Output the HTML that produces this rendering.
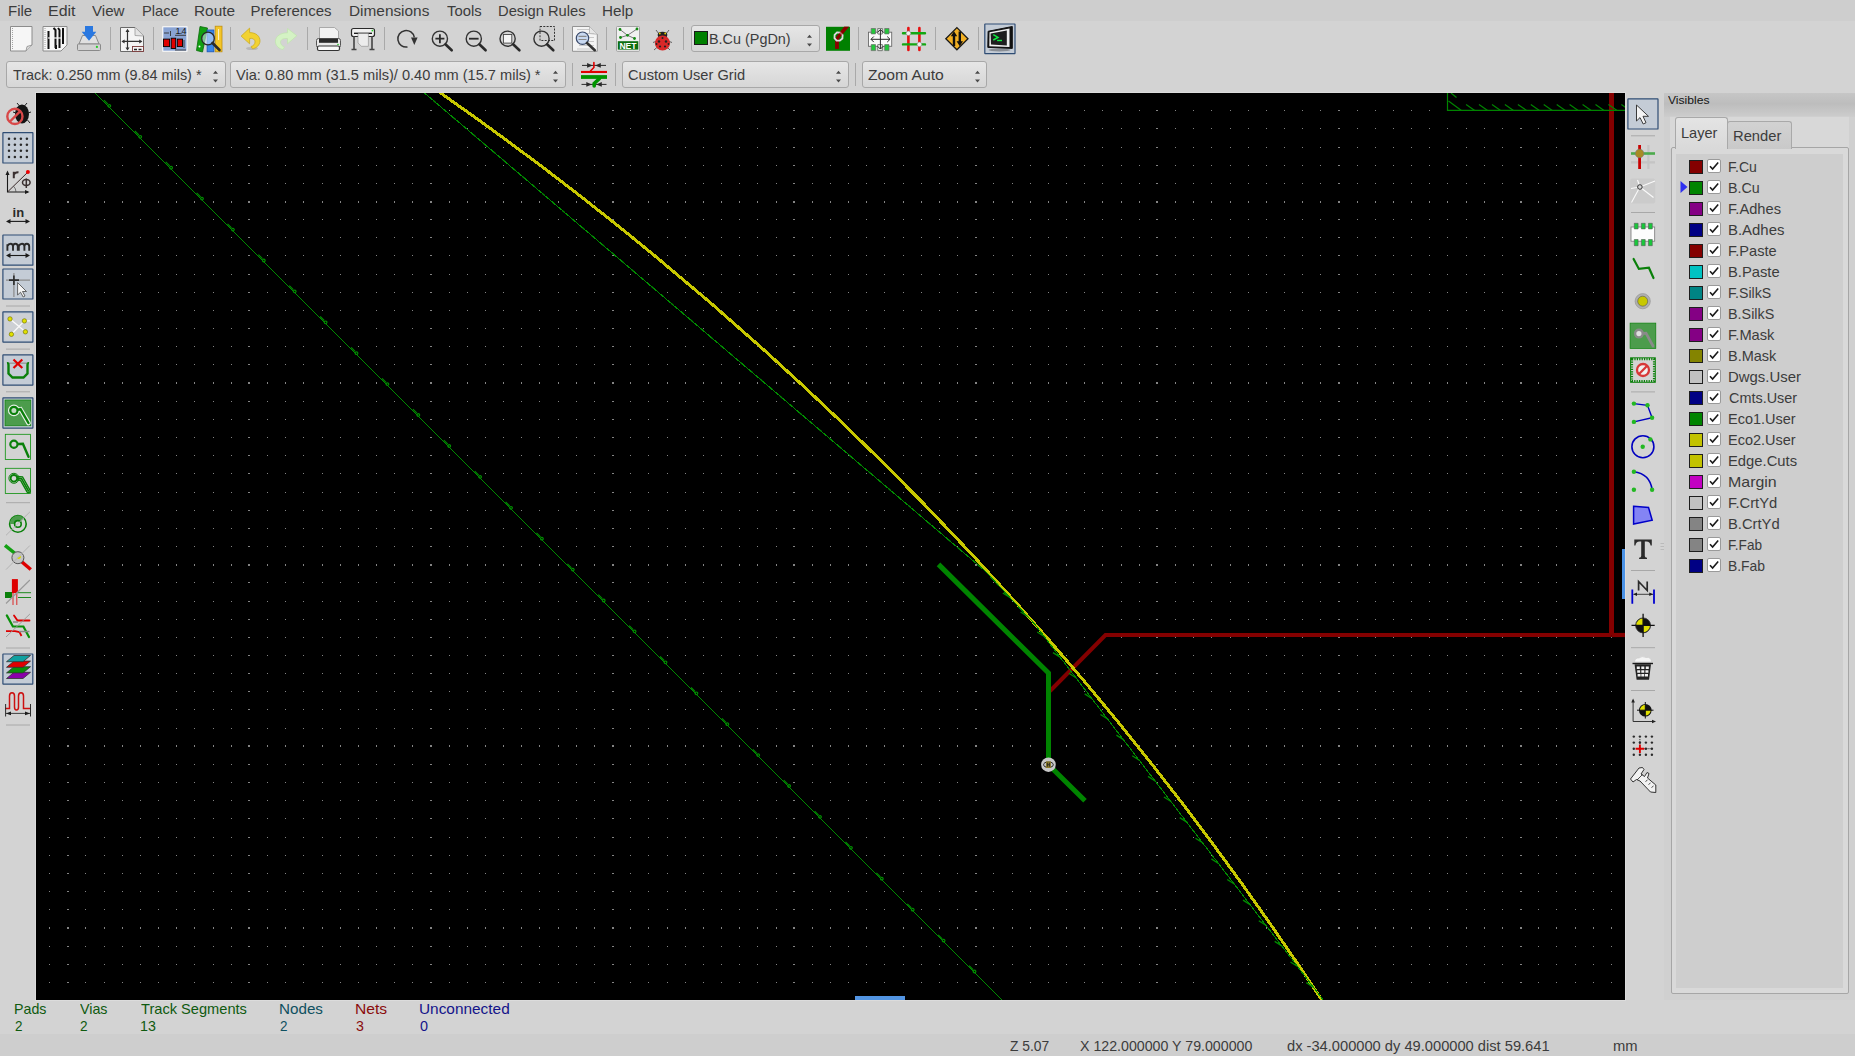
<!DOCTYPE html>
<html><head><meta charset="utf-8"><style>
html,body{margin:0;padding:0;}
body{width:1855px;height:1056px;position:relative;overflow:hidden;background:#d3d3d3;font-family:"Liberation Sans",sans-serif;}
.abs{position:absolute;}
.combo{border:1px solid #a8a8a8;border-radius:3px;background:linear-gradient(#e6e6e6,#d6d6d6);}
.t{position:absolute;white-space:nowrap;line-height:1;transform-origin:0 0;}
svg{display:block}
</style></head><body>
<svg class="abs" style="left:36px;top:93px" width="1589" height="907" viewBox="0 0 1589 907"><rect width="1589" height="907" fill="#000"/><path d="M13 17h1v1h-1zM31 17h2v1h-2zM49 17h1v1h-1zM68 17h1v1h-1zM86 17h1v1h-1zM104 17h1v1h-1zM122 17h1v1h-1zM140 17h1v1h-1zM158 17h1v1h-1zM177 17h1v1h-1zM195 17h1v1h-1zM212 17h2v1h-2zM231 17h1v1h-1zM249 17h1v1h-1zM267 17h1v1h-1zM286 17h1v1h-1zM304 17h1v1h-1zM322 17h1v1h-1zM340 17h1v1h-1zM358 17h1v1h-1zM376 17h1v1h-1zM394 17h2v1h-2zM413 17h1v1h-1zM431 17h1v1h-1zM449 17h1v1h-1zM467 17h1v1h-1zM485 17h1v1h-1zM503 17h1v1h-1zM522 17h1v1h-1zM540 17h1v1h-1zM558 17h1v1h-1zM576 17h2v1h-2zM594 17h1v1h-1zM612 17h1v1h-1zM631 17h1v1h-1zM649 17h1v1h-1zM667 17h1v1h-1zM685 17h1v1h-1zM703 17h1v1h-1zM721 17h1v1h-1zM740 17h1v1h-1zM757 17h2v1h-2zM776 17h1v1h-1zM794 17h1v1h-1zM812 17h1v1h-1zM830 17h1v1h-1zM848 17h1v1h-1zM867 17h1v1h-1zM885 17h1v1h-1zM903 17h1v1h-1zM921 17h1v1h-1zM939 17h2v1h-2zM957 17h1v1h-1zM976 17h1v1h-1zM994 17h1v1h-1zM1012 17h1v1h-1zM1030 17h1v1h-1zM1048 17h1v1h-1zM1066 17h1v1h-1zM1085 17h1v1h-1zM1103 17h1v1h-1zM1120 17h2v1h-2zM1139 17h1v1h-1zM1157 17h1v1h-1zM1175 17h1v1h-1zM1194 17h1v1h-1zM1212 17h1v1h-1zM1230 17h1v1h-1zM1248 17h1v1h-1zM1266 17h1v1h-1zM1284 17h1v1h-1zM1302 17h2v1h-2zM1321 17h1v1h-1zM1339 17h1v1h-1zM1357 17h1v1h-1zM1375 17h1v1h-1zM1393 17h1v1h-1zM1411 17h1v1h-1zM1430 17h1v1h-1zM1448 17h1v1h-1zM1466 17h1v1h-1zM1484 17h2v1h-2zM1502 17h1v1h-1zM1520 17h1v1h-1zM1539 17h1v1h-1zM1557 17h1v1h-1zM1575 17h1v1h-1zM13 35h1v1h-1zM31 35h2v1h-2zM49 35h1v1h-1zM68 35h1v1h-1zM86 35h1v1h-1zM104 35h1v1h-1zM122 35h1v1h-1zM140 35h1v1h-1zM158 35h1v1h-1zM177 35h1v1h-1zM195 35h1v1h-1zM212 35h2v1h-2zM231 35h1v1h-1zM249 35h1v1h-1zM267 35h1v1h-1zM286 35h1v1h-1zM304 35h1v1h-1zM322 35h1v1h-1zM340 35h1v1h-1zM358 35h1v1h-1zM376 35h1v1h-1zM394 35h2v1h-2zM413 35h1v1h-1zM431 35h1v1h-1zM449 35h1v1h-1zM467 35h1v1h-1zM485 35h1v1h-1zM503 35h1v1h-1zM522 35h1v1h-1zM540 35h1v1h-1zM558 35h1v1h-1zM576 35h2v1h-2zM594 35h1v1h-1zM612 35h1v1h-1zM631 35h1v1h-1zM649 35h1v1h-1zM667 35h1v1h-1zM685 35h1v1h-1zM703 35h1v1h-1zM721 35h1v1h-1zM740 35h1v1h-1zM757 35h2v1h-2zM776 35h1v1h-1zM794 35h1v1h-1zM812 35h1v1h-1zM830 35h1v1h-1zM848 35h1v1h-1zM867 35h1v1h-1zM885 35h1v1h-1zM903 35h1v1h-1zM921 35h1v1h-1zM939 35h2v1h-2zM957 35h1v1h-1zM976 35h1v1h-1zM994 35h1v1h-1zM1012 35h1v1h-1zM1030 35h1v1h-1zM1048 35h1v1h-1zM1066 35h1v1h-1zM1085 35h1v1h-1zM1103 35h1v1h-1zM1120 35h2v1h-2zM1139 35h1v1h-1zM1157 35h1v1h-1zM1175 35h1v1h-1zM1194 35h1v1h-1zM1212 35h1v1h-1zM1230 35h1v1h-1zM1248 35h1v1h-1zM1266 35h1v1h-1zM1284 35h1v1h-1zM1302 35h2v1h-2zM1321 35h1v1h-1zM1339 35h1v1h-1zM1357 35h1v1h-1zM1375 35h1v1h-1zM1393 35h1v1h-1zM1411 35h1v1h-1zM1430 35h1v1h-1zM1448 35h1v1h-1zM1466 35h1v1h-1zM1484 35h2v1h-2zM1502 35h1v1h-1zM1520 35h1v1h-1zM1539 35h1v1h-1zM1557 35h1v1h-1zM1575 35h1v1h-1zM13 54h1v1h-1zM31 54h2v1h-2zM49 54h1v1h-1zM68 54h1v1h-1zM86 54h1v1h-1zM104 54h1v1h-1zM122 54h1v1h-1zM140 54h1v1h-1zM158 54h1v1h-1zM177 54h1v1h-1zM195 54h1v1h-1zM212 54h2v1h-2zM231 54h1v1h-1zM249 54h1v1h-1zM267 54h1v1h-1zM286 54h1v1h-1zM304 54h1v1h-1zM322 54h1v1h-1zM340 54h1v1h-1zM358 54h1v1h-1zM376 54h1v1h-1zM394 54h2v1h-2zM413 54h1v1h-1zM431 54h1v1h-1zM449 54h1v1h-1zM467 54h1v1h-1zM485 54h1v1h-1zM503 54h1v1h-1zM522 54h1v1h-1zM540 54h1v1h-1zM558 54h1v1h-1zM576 54h2v1h-2zM594 54h1v1h-1zM612 54h1v1h-1zM631 54h1v1h-1zM649 54h1v1h-1zM667 54h1v1h-1zM685 54h1v1h-1zM703 54h1v1h-1zM721 54h1v1h-1zM740 54h1v1h-1zM757 54h2v1h-2zM776 54h1v1h-1zM794 54h1v1h-1zM812 54h1v1h-1zM830 54h1v1h-1zM848 54h1v1h-1zM867 54h1v1h-1zM885 54h1v1h-1zM903 54h1v1h-1zM921 54h1v1h-1zM939 54h2v1h-2zM957 54h1v1h-1zM976 54h1v1h-1zM994 54h1v1h-1zM1012 54h1v1h-1zM1030 54h1v1h-1zM1048 54h1v1h-1zM1066 54h1v1h-1zM1085 54h1v1h-1zM1103 54h1v1h-1zM1120 54h2v1h-2zM1139 54h1v1h-1zM1157 54h1v1h-1zM1175 54h1v1h-1zM1194 54h1v1h-1zM1212 54h1v1h-1zM1230 54h1v1h-1zM1248 54h1v1h-1zM1266 54h1v1h-1zM1284 54h1v1h-1zM1302 54h2v1h-2zM1321 54h1v1h-1zM1339 54h1v1h-1zM1357 54h1v1h-1zM1375 54h1v1h-1zM1393 54h1v1h-1zM1411 54h1v1h-1zM1430 54h1v1h-1zM1448 54h1v1h-1zM1466 54h1v1h-1zM1484 54h2v1h-2zM1502 54h1v1h-1zM1520 54h1v1h-1zM1539 54h1v1h-1zM1557 54h1v1h-1zM1575 54h1v1h-1zM13 72h1v1h-1zM31 72h2v1h-2zM49 72h1v1h-1zM68 72h1v1h-1zM86 72h1v1h-1zM104 72h1v1h-1zM122 72h1v1h-1zM140 72h1v1h-1zM158 72h1v1h-1zM177 72h1v1h-1zM195 72h1v1h-1zM212 72h2v1h-2zM231 72h1v1h-1zM249 72h1v1h-1zM267 72h1v1h-1zM286 72h1v1h-1zM304 72h1v1h-1zM322 72h1v1h-1zM340 72h1v1h-1zM358 72h1v1h-1zM376 72h1v1h-1zM394 72h2v1h-2zM413 72h1v1h-1zM431 72h1v1h-1zM449 72h1v1h-1zM467 72h1v1h-1zM485 72h1v1h-1zM503 72h1v1h-1zM522 72h1v1h-1zM540 72h1v1h-1zM558 72h1v1h-1zM576 72h2v1h-2zM594 72h1v1h-1zM612 72h1v1h-1zM631 72h1v1h-1zM649 72h1v1h-1zM667 72h1v1h-1zM685 72h1v1h-1zM703 72h1v1h-1zM721 72h1v1h-1zM740 72h1v1h-1zM757 72h2v1h-2zM776 72h1v1h-1zM794 72h1v1h-1zM812 72h1v1h-1zM830 72h1v1h-1zM848 72h1v1h-1zM867 72h1v1h-1zM885 72h1v1h-1zM903 72h1v1h-1zM921 72h1v1h-1zM939 72h2v1h-2zM957 72h1v1h-1zM976 72h1v1h-1zM994 72h1v1h-1zM1012 72h1v1h-1zM1030 72h1v1h-1zM1048 72h1v1h-1zM1066 72h1v1h-1zM1085 72h1v1h-1zM1103 72h1v1h-1zM1120 72h2v1h-2zM1139 72h1v1h-1zM1157 72h1v1h-1zM1175 72h1v1h-1zM1194 72h1v1h-1zM1212 72h1v1h-1zM1230 72h1v1h-1zM1248 72h1v1h-1zM1266 72h1v1h-1zM1284 72h1v1h-1zM1302 72h2v1h-2zM1321 72h1v1h-1zM1339 72h1v1h-1zM1357 72h1v1h-1zM1375 72h1v1h-1zM1393 72h1v1h-1zM1411 72h1v1h-1zM1430 72h1v1h-1zM1448 72h1v1h-1zM1466 72h1v1h-1zM1484 72h2v1h-2zM1502 72h1v1h-1zM1520 72h1v1h-1zM1539 72h1v1h-1zM1557 72h1v1h-1zM1575 72h1v1h-1zM13 90h1v1h-1zM31 90h2v1h-2zM49 90h1v1h-1zM68 90h1v1h-1zM86 90h1v1h-1zM104 90h1v1h-1zM122 90h1v1h-1zM140 90h1v1h-1zM158 90h1v1h-1zM177 90h1v1h-1zM195 90h1v1h-1zM212 90h2v1h-2zM231 90h1v1h-1zM249 90h1v1h-1zM267 90h1v1h-1zM286 90h1v1h-1zM304 90h1v1h-1zM322 90h1v1h-1zM340 90h1v1h-1zM358 90h1v1h-1zM376 90h1v1h-1zM394 90h2v1h-2zM413 90h1v1h-1zM431 90h1v1h-1zM449 90h1v1h-1zM467 90h1v1h-1zM485 90h1v1h-1zM503 90h1v1h-1zM522 90h1v1h-1zM540 90h1v1h-1zM558 90h1v1h-1zM576 90h2v1h-2zM594 90h1v1h-1zM612 90h1v1h-1zM631 90h1v1h-1zM649 90h1v1h-1zM667 90h1v1h-1zM685 90h1v1h-1zM703 90h1v1h-1zM721 90h1v1h-1zM740 90h1v1h-1zM757 90h2v1h-2zM776 90h1v1h-1zM794 90h1v1h-1zM812 90h1v1h-1zM830 90h1v1h-1zM848 90h1v1h-1zM867 90h1v1h-1zM885 90h1v1h-1zM903 90h1v1h-1zM921 90h1v1h-1zM939 90h2v1h-2zM957 90h1v1h-1zM976 90h1v1h-1zM994 90h1v1h-1zM1012 90h1v1h-1zM1030 90h1v1h-1zM1048 90h1v1h-1zM1066 90h1v1h-1zM1085 90h1v1h-1zM1103 90h1v1h-1zM1120 90h2v1h-2zM1139 90h1v1h-1zM1157 90h1v1h-1zM1175 90h1v1h-1zM1194 90h1v1h-1zM1212 90h1v1h-1zM1230 90h1v1h-1zM1248 90h1v1h-1zM1266 90h1v1h-1zM1284 90h1v1h-1zM1302 90h2v1h-2zM1321 90h1v1h-1zM1339 90h1v1h-1zM1357 90h1v1h-1zM1375 90h1v1h-1zM1393 90h1v1h-1zM1411 90h1v1h-1zM1430 90h1v1h-1zM1448 90h1v1h-1zM1466 90h1v1h-1zM1484 90h2v1h-2zM1502 90h1v1h-1zM1520 90h1v1h-1zM1539 90h1v1h-1zM1557 90h1v1h-1zM1575 90h1v1h-1zM13 108h1v2h-1zM31 108h2v2h-2zM49 108h1v2h-1zM68 108h1v2h-1zM86 108h1v2h-1zM104 108h1v2h-1zM122 108h1v2h-1zM140 108h1v2h-1zM158 108h1v2h-1zM177 108h1v2h-1zM195 108h1v2h-1zM212 108h2v2h-2zM231 108h1v2h-1zM249 108h1v2h-1zM267 108h1v2h-1zM286 108h1v2h-1zM304 108h1v2h-1zM322 108h1v2h-1zM340 108h1v2h-1zM358 108h1v2h-1zM376 108h1v2h-1zM394 108h2v2h-2zM413 108h1v2h-1zM431 108h1v2h-1zM449 108h1v2h-1zM467 108h1v2h-1zM485 108h1v2h-1zM503 108h1v2h-1zM522 108h1v2h-1zM540 108h1v2h-1zM558 108h1v2h-1zM576 108h2v2h-2zM594 108h1v2h-1zM612 108h1v2h-1zM631 108h1v2h-1zM649 108h1v2h-1zM667 108h1v2h-1zM685 108h1v2h-1zM703 108h1v2h-1zM721 108h1v2h-1zM740 108h1v2h-1zM757 108h2v2h-2zM776 108h1v2h-1zM794 108h1v2h-1zM812 108h1v2h-1zM830 108h1v2h-1zM848 108h1v2h-1zM867 108h1v2h-1zM885 108h1v2h-1zM903 108h1v2h-1zM921 108h1v2h-1zM939 108h2v2h-2zM957 108h1v2h-1zM976 108h1v2h-1zM994 108h1v2h-1zM1012 108h1v2h-1zM1030 108h1v2h-1zM1048 108h1v2h-1zM1066 108h1v2h-1zM1085 108h1v2h-1zM1103 108h1v2h-1zM1120 108h2v2h-2zM1139 108h1v2h-1zM1157 108h1v2h-1zM1175 108h1v2h-1zM1194 108h1v2h-1zM1212 108h1v2h-1zM1230 108h1v2h-1zM1248 108h1v2h-1zM1266 108h1v2h-1zM1284 108h1v2h-1zM1302 108h2v2h-2zM1321 108h1v2h-1zM1339 108h1v2h-1zM1357 108h1v2h-1zM1375 108h1v2h-1zM1393 108h1v2h-1zM1411 108h1v2h-1zM1430 108h1v2h-1zM1448 108h1v2h-1zM1466 108h1v2h-1zM1484 108h2v2h-2zM1502 108h1v2h-1zM1520 108h1v2h-1zM1539 108h1v2h-1zM1557 108h1v2h-1zM1575 108h1v2h-1zM13 126h1v1h-1zM31 126h2v1h-2zM49 126h1v1h-1zM68 126h1v1h-1zM86 126h1v1h-1zM104 126h1v1h-1zM122 126h1v1h-1zM140 126h1v1h-1zM158 126h1v1h-1zM177 126h1v1h-1zM195 126h1v1h-1zM212 126h2v1h-2zM231 126h1v1h-1zM249 126h1v1h-1zM267 126h1v1h-1zM286 126h1v1h-1zM304 126h1v1h-1zM322 126h1v1h-1zM340 126h1v1h-1zM358 126h1v1h-1zM376 126h1v1h-1zM394 126h2v1h-2zM413 126h1v1h-1zM431 126h1v1h-1zM449 126h1v1h-1zM467 126h1v1h-1zM485 126h1v1h-1zM503 126h1v1h-1zM522 126h1v1h-1zM540 126h1v1h-1zM558 126h1v1h-1zM576 126h2v1h-2zM594 126h1v1h-1zM612 126h1v1h-1zM631 126h1v1h-1zM649 126h1v1h-1zM667 126h1v1h-1zM685 126h1v1h-1zM703 126h1v1h-1zM721 126h1v1h-1zM740 126h1v1h-1zM757 126h2v1h-2zM776 126h1v1h-1zM794 126h1v1h-1zM812 126h1v1h-1zM830 126h1v1h-1zM848 126h1v1h-1zM867 126h1v1h-1zM885 126h1v1h-1zM903 126h1v1h-1zM921 126h1v1h-1zM939 126h2v1h-2zM957 126h1v1h-1zM976 126h1v1h-1zM994 126h1v1h-1zM1012 126h1v1h-1zM1030 126h1v1h-1zM1048 126h1v1h-1zM1066 126h1v1h-1zM1085 126h1v1h-1zM1103 126h1v1h-1zM1120 126h2v1h-2zM1139 126h1v1h-1zM1157 126h1v1h-1zM1175 126h1v1h-1zM1194 126h1v1h-1zM1212 126h1v1h-1zM1230 126h1v1h-1zM1248 126h1v1h-1zM1266 126h1v1h-1zM1284 126h1v1h-1zM1302 126h2v1h-2zM1321 126h1v1h-1zM1339 126h1v1h-1zM1357 126h1v1h-1zM1375 126h1v1h-1zM1393 126h1v1h-1zM1411 126h1v1h-1zM1430 126h1v1h-1zM1448 126h1v1h-1zM1466 126h1v1h-1zM1484 126h2v1h-2zM1502 126h1v1h-1zM1520 126h1v1h-1zM1539 126h1v1h-1zM1557 126h1v1h-1zM1575 126h1v1h-1zM13 144h1v1h-1zM31 144h2v1h-2zM49 144h1v1h-1zM68 144h1v1h-1zM86 144h1v1h-1zM104 144h1v1h-1zM122 144h1v1h-1zM140 144h1v1h-1zM158 144h1v1h-1zM177 144h1v1h-1zM195 144h1v1h-1zM212 144h2v1h-2zM231 144h1v1h-1zM249 144h1v1h-1zM267 144h1v1h-1zM286 144h1v1h-1zM304 144h1v1h-1zM322 144h1v1h-1zM340 144h1v1h-1zM358 144h1v1h-1zM376 144h1v1h-1zM394 144h2v1h-2zM413 144h1v1h-1zM431 144h1v1h-1zM449 144h1v1h-1zM467 144h1v1h-1zM485 144h1v1h-1zM503 144h1v1h-1zM522 144h1v1h-1zM540 144h1v1h-1zM558 144h1v1h-1zM576 144h2v1h-2zM594 144h1v1h-1zM612 144h1v1h-1zM631 144h1v1h-1zM649 144h1v1h-1zM667 144h1v1h-1zM685 144h1v1h-1zM703 144h1v1h-1zM721 144h1v1h-1zM740 144h1v1h-1zM757 144h2v1h-2zM776 144h1v1h-1zM794 144h1v1h-1zM812 144h1v1h-1zM830 144h1v1h-1zM848 144h1v1h-1zM867 144h1v1h-1zM885 144h1v1h-1zM903 144h1v1h-1zM921 144h1v1h-1zM939 144h2v1h-2zM957 144h1v1h-1zM976 144h1v1h-1zM994 144h1v1h-1zM1012 144h1v1h-1zM1030 144h1v1h-1zM1048 144h1v1h-1zM1066 144h1v1h-1zM1085 144h1v1h-1zM1103 144h1v1h-1zM1120 144h2v1h-2zM1139 144h1v1h-1zM1157 144h1v1h-1zM1175 144h1v1h-1zM1194 144h1v1h-1zM1212 144h1v1h-1zM1230 144h1v1h-1zM1248 144h1v1h-1zM1266 144h1v1h-1zM1284 144h1v1h-1zM1302 144h2v1h-2zM1321 144h1v1h-1zM1339 144h1v1h-1zM1357 144h1v1h-1zM1375 144h1v1h-1zM1393 144h1v1h-1zM1411 144h1v1h-1zM1430 144h1v1h-1zM1448 144h1v1h-1zM1466 144h1v1h-1zM1484 144h2v1h-2zM1502 144h1v1h-1zM1520 144h1v1h-1zM1539 144h1v1h-1zM1557 144h1v1h-1zM1575 144h1v1h-1zM13 162h1v1h-1zM31 162h2v1h-2zM49 162h1v1h-1zM68 162h1v1h-1zM86 162h1v1h-1zM104 162h1v1h-1zM122 162h1v1h-1zM140 162h1v1h-1zM158 162h1v1h-1zM177 162h1v1h-1zM195 162h1v1h-1zM212 162h2v1h-2zM231 162h1v1h-1zM249 162h1v1h-1zM267 162h1v1h-1zM286 162h1v1h-1zM304 162h1v1h-1zM322 162h1v1h-1zM340 162h1v1h-1zM358 162h1v1h-1zM376 162h1v1h-1zM394 162h2v1h-2zM413 162h1v1h-1zM431 162h1v1h-1zM449 162h1v1h-1zM467 162h1v1h-1zM485 162h1v1h-1zM503 162h1v1h-1zM522 162h1v1h-1zM540 162h1v1h-1zM558 162h1v1h-1zM576 162h2v1h-2zM594 162h1v1h-1zM612 162h1v1h-1zM631 162h1v1h-1zM649 162h1v1h-1zM667 162h1v1h-1zM685 162h1v1h-1zM703 162h1v1h-1zM721 162h1v1h-1zM740 162h1v1h-1zM757 162h2v1h-2zM776 162h1v1h-1zM794 162h1v1h-1zM812 162h1v1h-1zM830 162h1v1h-1zM848 162h1v1h-1zM867 162h1v1h-1zM885 162h1v1h-1zM903 162h1v1h-1zM921 162h1v1h-1zM939 162h2v1h-2zM957 162h1v1h-1zM976 162h1v1h-1zM994 162h1v1h-1zM1012 162h1v1h-1zM1030 162h1v1h-1zM1048 162h1v1h-1zM1066 162h1v1h-1zM1085 162h1v1h-1zM1103 162h1v1h-1zM1120 162h2v1h-2zM1139 162h1v1h-1zM1157 162h1v1h-1zM1175 162h1v1h-1zM1194 162h1v1h-1zM1212 162h1v1h-1zM1230 162h1v1h-1zM1248 162h1v1h-1zM1266 162h1v1h-1zM1284 162h1v1h-1zM1302 162h2v1h-2zM1321 162h1v1h-1zM1339 162h1v1h-1zM1357 162h1v1h-1zM1375 162h1v1h-1zM1393 162h1v1h-1zM1411 162h1v1h-1zM1430 162h1v1h-1zM1448 162h1v1h-1zM1466 162h1v1h-1zM1484 162h2v1h-2zM1502 162h1v1h-1zM1520 162h1v1h-1zM1539 162h1v1h-1zM1557 162h1v1h-1zM1575 162h1v1h-1zM13 181h1v1h-1zM31 181h2v1h-2zM49 181h1v1h-1zM68 181h1v1h-1zM86 181h1v1h-1zM104 181h1v1h-1zM122 181h1v1h-1zM140 181h1v1h-1zM158 181h1v1h-1zM177 181h1v1h-1zM195 181h1v1h-1zM212 181h2v1h-2zM231 181h1v1h-1zM249 181h1v1h-1zM267 181h1v1h-1zM286 181h1v1h-1zM304 181h1v1h-1zM322 181h1v1h-1zM340 181h1v1h-1zM358 181h1v1h-1zM376 181h1v1h-1zM394 181h2v1h-2zM413 181h1v1h-1zM431 181h1v1h-1zM449 181h1v1h-1zM467 181h1v1h-1zM485 181h1v1h-1zM503 181h1v1h-1zM522 181h1v1h-1zM540 181h1v1h-1zM558 181h1v1h-1zM576 181h2v1h-2zM594 181h1v1h-1zM612 181h1v1h-1zM631 181h1v1h-1zM649 181h1v1h-1zM667 181h1v1h-1zM685 181h1v1h-1zM703 181h1v1h-1zM721 181h1v1h-1zM740 181h1v1h-1zM757 181h2v1h-2zM776 181h1v1h-1zM794 181h1v1h-1zM812 181h1v1h-1zM830 181h1v1h-1zM848 181h1v1h-1zM867 181h1v1h-1zM885 181h1v1h-1zM903 181h1v1h-1zM921 181h1v1h-1zM939 181h2v1h-2zM957 181h1v1h-1zM976 181h1v1h-1zM994 181h1v1h-1zM1012 181h1v1h-1zM1030 181h1v1h-1zM1048 181h1v1h-1zM1066 181h1v1h-1zM1085 181h1v1h-1zM1103 181h1v1h-1zM1120 181h2v1h-2zM1139 181h1v1h-1zM1157 181h1v1h-1zM1175 181h1v1h-1zM1194 181h1v1h-1zM1212 181h1v1h-1zM1230 181h1v1h-1zM1248 181h1v1h-1zM1266 181h1v1h-1zM1284 181h1v1h-1zM1302 181h2v1h-2zM1321 181h1v1h-1zM1339 181h1v1h-1zM1357 181h1v1h-1zM1375 181h1v1h-1zM1393 181h1v1h-1zM1411 181h1v1h-1zM1430 181h1v1h-1zM1448 181h1v1h-1zM1466 181h1v1h-1zM1484 181h2v1h-2zM1502 181h1v1h-1zM1520 181h1v1h-1zM1539 181h1v1h-1zM1557 181h1v1h-1zM1575 181h1v1h-1zM13 199h1v1h-1zM31 199h2v1h-2zM49 199h1v1h-1zM68 199h1v1h-1zM86 199h1v1h-1zM104 199h1v1h-1zM122 199h1v1h-1zM140 199h1v1h-1zM158 199h1v1h-1zM177 199h1v1h-1zM195 199h1v1h-1zM212 199h2v1h-2zM231 199h1v1h-1zM249 199h1v1h-1zM267 199h1v1h-1zM286 199h1v1h-1zM304 199h1v1h-1zM322 199h1v1h-1zM340 199h1v1h-1zM358 199h1v1h-1zM376 199h1v1h-1zM394 199h2v1h-2zM413 199h1v1h-1zM431 199h1v1h-1zM449 199h1v1h-1zM467 199h1v1h-1zM485 199h1v1h-1zM503 199h1v1h-1zM522 199h1v1h-1zM540 199h1v1h-1zM558 199h1v1h-1zM576 199h2v1h-2zM594 199h1v1h-1zM612 199h1v1h-1zM631 199h1v1h-1zM649 199h1v1h-1zM667 199h1v1h-1zM685 199h1v1h-1zM703 199h1v1h-1zM721 199h1v1h-1zM740 199h1v1h-1zM757 199h2v1h-2zM776 199h1v1h-1zM794 199h1v1h-1zM812 199h1v1h-1zM830 199h1v1h-1zM848 199h1v1h-1zM867 199h1v1h-1zM885 199h1v1h-1zM903 199h1v1h-1zM921 199h1v1h-1zM939 199h2v1h-2zM957 199h1v1h-1zM976 199h1v1h-1zM994 199h1v1h-1zM1012 199h1v1h-1zM1030 199h1v1h-1zM1048 199h1v1h-1zM1066 199h1v1h-1zM1085 199h1v1h-1zM1103 199h1v1h-1zM1120 199h2v1h-2zM1139 199h1v1h-1zM1157 199h1v1h-1zM1175 199h1v1h-1zM1194 199h1v1h-1zM1212 199h1v1h-1zM1230 199h1v1h-1zM1248 199h1v1h-1zM1266 199h1v1h-1zM1284 199h1v1h-1zM1302 199h2v1h-2zM1321 199h1v1h-1zM1339 199h1v1h-1zM1357 199h1v1h-1zM1375 199h1v1h-1zM1393 199h1v1h-1zM1411 199h1v1h-1zM1430 199h1v1h-1zM1448 199h1v1h-1zM1466 199h1v1h-1zM1484 199h2v1h-2zM1502 199h1v1h-1zM1520 199h1v1h-1zM1539 199h1v1h-1zM1557 199h1v1h-1zM1575 199h1v1h-1zM13 217h1v1h-1zM31 217h2v1h-2zM49 217h1v1h-1zM68 217h1v1h-1zM86 217h1v1h-1zM104 217h1v1h-1zM122 217h1v1h-1zM140 217h1v1h-1zM158 217h1v1h-1zM177 217h1v1h-1zM195 217h1v1h-1zM212 217h2v1h-2zM231 217h1v1h-1zM249 217h1v1h-1zM267 217h1v1h-1zM286 217h1v1h-1zM304 217h1v1h-1zM322 217h1v1h-1zM340 217h1v1h-1zM358 217h1v1h-1zM376 217h1v1h-1zM394 217h2v1h-2zM413 217h1v1h-1zM431 217h1v1h-1zM449 217h1v1h-1zM467 217h1v1h-1zM485 217h1v1h-1zM503 217h1v1h-1zM522 217h1v1h-1zM540 217h1v1h-1zM558 217h1v1h-1zM576 217h2v1h-2zM594 217h1v1h-1zM612 217h1v1h-1zM631 217h1v1h-1zM649 217h1v1h-1zM667 217h1v1h-1zM685 217h1v1h-1zM703 217h1v1h-1zM721 217h1v1h-1zM740 217h1v1h-1zM757 217h2v1h-2zM776 217h1v1h-1zM794 217h1v1h-1zM812 217h1v1h-1zM830 217h1v1h-1zM848 217h1v1h-1zM867 217h1v1h-1zM885 217h1v1h-1zM903 217h1v1h-1zM921 217h1v1h-1zM939 217h2v1h-2zM957 217h1v1h-1zM976 217h1v1h-1zM994 217h1v1h-1zM1012 217h1v1h-1zM1030 217h1v1h-1zM1048 217h1v1h-1zM1066 217h1v1h-1zM1085 217h1v1h-1zM1103 217h1v1h-1zM1120 217h2v1h-2zM1139 217h1v1h-1zM1157 217h1v1h-1zM1175 217h1v1h-1zM1194 217h1v1h-1zM1212 217h1v1h-1zM1230 217h1v1h-1zM1248 217h1v1h-1zM1266 217h1v1h-1zM1284 217h1v1h-1zM1302 217h2v1h-2zM1321 217h1v1h-1zM1339 217h1v1h-1zM1357 217h1v1h-1zM1375 217h1v1h-1zM1393 217h1v1h-1zM1411 217h1v1h-1zM1430 217h1v1h-1zM1448 217h1v1h-1zM1466 217h1v1h-1zM1484 217h2v1h-2zM1502 217h1v1h-1zM1520 217h1v1h-1zM1539 217h1v1h-1zM1557 217h1v1h-1zM1575 217h1v1h-1zM13 235h1v1h-1zM31 235h2v1h-2zM49 235h1v1h-1zM68 235h1v1h-1zM86 235h1v1h-1zM104 235h1v1h-1zM122 235h1v1h-1zM140 235h1v1h-1zM158 235h1v1h-1zM177 235h1v1h-1zM195 235h1v1h-1zM212 235h2v1h-2zM231 235h1v1h-1zM249 235h1v1h-1zM267 235h1v1h-1zM286 235h1v1h-1zM304 235h1v1h-1zM322 235h1v1h-1zM340 235h1v1h-1zM358 235h1v1h-1zM376 235h1v1h-1zM394 235h2v1h-2zM413 235h1v1h-1zM431 235h1v1h-1zM449 235h1v1h-1zM467 235h1v1h-1zM485 235h1v1h-1zM503 235h1v1h-1zM522 235h1v1h-1zM540 235h1v1h-1zM558 235h1v1h-1zM576 235h2v1h-2zM594 235h1v1h-1zM612 235h1v1h-1zM631 235h1v1h-1zM649 235h1v1h-1zM667 235h1v1h-1zM685 235h1v1h-1zM703 235h1v1h-1zM721 235h1v1h-1zM740 235h1v1h-1zM757 235h2v1h-2zM776 235h1v1h-1zM794 235h1v1h-1zM812 235h1v1h-1zM830 235h1v1h-1zM848 235h1v1h-1zM867 235h1v1h-1zM885 235h1v1h-1zM903 235h1v1h-1zM921 235h1v1h-1zM939 235h2v1h-2zM957 235h1v1h-1zM976 235h1v1h-1zM994 235h1v1h-1zM1012 235h1v1h-1zM1030 235h1v1h-1zM1048 235h1v1h-1zM1066 235h1v1h-1zM1085 235h1v1h-1zM1103 235h1v1h-1zM1120 235h2v1h-2zM1139 235h1v1h-1zM1157 235h1v1h-1zM1175 235h1v1h-1zM1194 235h1v1h-1zM1212 235h1v1h-1zM1230 235h1v1h-1zM1248 235h1v1h-1zM1266 235h1v1h-1zM1284 235h1v1h-1zM1302 235h2v1h-2zM1321 235h1v1h-1zM1339 235h1v1h-1zM1357 235h1v1h-1zM1375 235h1v1h-1zM1393 235h1v1h-1zM1411 235h1v1h-1zM1430 235h1v1h-1zM1448 235h1v1h-1zM1466 235h1v1h-1zM1484 235h2v1h-2zM1502 235h1v1h-1zM1520 235h1v1h-1zM1539 235h1v1h-1zM1557 235h1v1h-1zM1575 235h1v1h-1zM13 253h1v1h-1zM31 253h2v1h-2zM49 253h1v1h-1zM68 253h1v1h-1zM86 253h1v1h-1zM104 253h1v1h-1zM122 253h1v1h-1zM140 253h1v1h-1zM158 253h1v1h-1zM177 253h1v1h-1zM195 253h1v1h-1zM212 253h2v1h-2zM231 253h1v1h-1zM249 253h1v1h-1zM267 253h1v1h-1zM286 253h1v1h-1zM304 253h1v1h-1zM322 253h1v1h-1zM340 253h1v1h-1zM358 253h1v1h-1zM376 253h1v1h-1zM394 253h2v1h-2zM413 253h1v1h-1zM431 253h1v1h-1zM449 253h1v1h-1zM467 253h1v1h-1zM485 253h1v1h-1zM503 253h1v1h-1zM522 253h1v1h-1zM540 253h1v1h-1zM558 253h1v1h-1zM576 253h2v1h-2zM594 253h1v1h-1zM612 253h1v1h-1zM631 253h1v1h-1zM649 253h1v1h-1zM667 253h1v1h-1zM685 253h1v1h-1zM703 253h1v1h-1zM721 253h1v1h-1zM740 253h1v1h-1zM757 253h2v1h-2zM776 253h1v1h-1zM794 253h1v1h-1zM812 253h1v1h-1zM830 253h1v1h-1zM848 253h1v1h-1zM867 253h1v1h-1zM885 253h1v1h-1zM903 253h1v1h-1zM921 253h1v1h-1zM939 253h2v1h-2zM957 253h1v1h-1zM976 253h1v1h-1zM994 253h1v1h-1zM1012 253h1v1h-1zM1030 253h1v1h-1zM1048 253h1v1h-1zM1066 253h1v1h-1zM1085 253h1v1h-1zM1103 253h1v1h-1zM1120 253h2v1h-2zM1139 253h1v1h-1zM1157 253h1v1h-1zM1175 253h1v1h-1zM1194 253h1v1h-1zM1212 253h1v1h-1zM1230 253h1v1h-1zM1248 253h1v1h-1zM1266 253h1v1h-1zM1284 253h1v1h-1zM1302 253h2v1h-2zM1321 253h1v1h-1zM1339 253h1v1h-1zM1357 253h1v1h-1zM1375 253h1v1h-1zM1393 253h1v1h-1zM1411 253h1v1h-1zM1430 253h1v1h-1zM1448 253h1v1h-1zM1466 253h1v1h-1zM1484 253h2v1h-2zM1502 253h1v1h-1zM1520 253h1v1h-1zM1539 253h1v1h-1zM1557 253h1v1h-1zM1575 253h1v1h-1zM13 271h1v1h-1zM31 271h2v1h-2zM49 271h1v1h-1zM68 271h1v1h-1zM86 271h1v1h-1zM104 271h1v1h-1zM122 271h1v1h-1zM140 271h1v1h-1zM158 271h1v1h-1zM177 271h1v1h-1zM195 271h1v1h-1zM212 271h2v1h-2zM231 271h1v1h-1zM249 271h1v1h-1zM267 271h1v1h-1zM286 271h1v1h-1zM304 271h1v1h-1zM322 271h1v1h-1zM340 271h1v1h-1zM358 271h1v1h-1zM376 271h1v1h-1zM394 271h2v1h-2zM413 271h1v1h-1zM431 271h1v1h-1zM449 271h1v1h-1zM467 271h1v1h-1zM485 271h1v1h-1zM503 271h1v1h-1zM522 271h1v1h-1zM540 271h1v1h-1zM558 271h1v1h-1zM576 271h2v1h-2zM594 271h1v1h-1zM612 271h1v1h-1zM631 271h1v1h-1zM649 271h1v1h-1zM667 271h1v1h-1zM685 271h1v1h-1zM703 271h1v1h-1zM721 271h1v1h-1zM740 271h1v1h-1zM757 271h2v1h-2zM776 271h1v1h-1zM794 271h1v1h-1zM812 271h1v1h-1zM830 271h1v1h-1zM848 271h1v1h-1zM867 271h1v1h-1zM885 271h1v1h-1zM903 271h1v1h-1zM921 271h1v1h-1zM939 271h2v1h-2zM957 271h1v1h-1zM976 271h1v1h-1zM994 271h1v1h-1zM1012 271h1v1h-1zM1030 271h1v1h-1zM1048 271h1v1h-1zM1066 271h1v1h-1zM1085 271h1v1h-1zM1103 271h1v1h-1zM1120 271h2v1h-2zM1139 271h1v1h-1zM1157 271h1v1h-1zM1175 271h1v1h-1zM1194 271h1v1h-1zM1212 271h1v1h-1zM1230 271h1v1h-1zM1248 271h1v1h-1zM1266 271h1v1h-1zM1284 271h1v1h-1zM1302 271h2v1h-2zM1321 271h1v1h-1zM1339 271h1v1h-1zM1357 271h1v1h-1zM1375 271h1v1h-1zM1393 271h1v1h-1zM1411 271h1v1h-1zM1430 271h1v1h-1zM1448 271h1v1h-1zM1466 271h1v1h-1zM1484 271h2v1h-2zM1502 271h1v1h-1zM1520 271h1v1h-1zM1539 271h1v1h-1zM1557 271h1v1h-1zM1575 271h1v1h-1zM13 289h1v2h-1zM31 289h2v2h-2zM49 289h1v2h-1zM68 289h1v2h-1zM86 289h1v2h-1zM104 289h1v2h-1zM122 289h1v2h-1zM140 289h1v2h-1zM158 289h1v2h-1zM177 289h1v2h-1zM195 289h1v2h-1zM212 289h2v2h-2zM231 289h1v2h-1zM249 289h1v2h-1zM267 289h1v2h-1zM286 289h1v2h-1zM304 289h1v2h-1zM322 289h1v2h-1zM340 289h1v2h-1zM358 289h1v2h-1zM376 289h1v2h-1zM394 289h2v2h-2zM413 289h1v2h-1zM431 289h1v2h-1zM449 289h1v2h-1zM467 289h1v2h-1zM485 289h1v2h-1zM503 289h1v2h-1zM522 289h1v2h-1zM540 289h1v2h-1zM558 289h1v2h-1zM576 289h2v2h-2zM594 289h1v2h-1zM612 289h1v2h-1zM631 289h1v2h-1zM649 289h1v2h-1zM667 289h1v2h-1zM685 289h1v2h-1zM703 289h1v2h-1zM721 289h1v2h-1zM740 289h1v2h-1zM757 289h2v2h-2zM776 289h1v2h-1zM794 289h1v2h-1zM812 289h1v2h-1zM830 289h1v2h-1zM848 289h1v2h-1zM867 289h1v2h-1zM885 289h1v2h-1zM903 289h1v2h-1zM921 289h1v2h-1zM939 289h2v2h-2zM957 289h1v2h-1zM976 289h1v2h-1zM994 289h1v2h-1zM1012 289h1v2h-1zM1030 289h1v2h-1zM1048 289h1v2h-1zM1066 289h1v2h-1zM1085 289h1v2h-1zM1103 289h1v2h-1zM1120 289h2v2h-2zM1139 289h1v2h-1zM1157 289h1v2h-1zM1175 289h1v2h-1zM1194 289h1v2h-1zM1212 289h1v2h-1zM1230 289h1v2h-1zM1248 289h1v2h-1zM1266 289h1v2h-1zM1284 289h1v2h-1zM1302 289h2v2h-2zM1321 289h1v2h-1zM1339 289h1v2h-1zM1357 289h1v2h-1zM1375 289h1v2h-1zM1393 289h1v2h-1zM1411 289h1v2h-1zM1430 289h1v2h-1zM1448 289h1v2h-1zM1466 289h1v2h-1zM1484 289h2v2h-2zM1502 289h1v2h-1zM1520 289h1v2h-1zM1539 289h1v2h-1zM1557 289h1v2h-1zM1575 289h1v2h-1zM13 308h1v1h-1zM31 308h2v1h-2zM49 308h1v1h-1zM68 308h1v1h-1zM86 308h1v1h-1zM104 308h1v1h-1zM122 308h1v1h-1zM140 308h1v1h-1zM158 308h1v1h-1zM177 308h1v1h-1zM195 308h1v1h-1zM212 308h2v1h-2zM231 308h1v1h-1zM249 308h1v1h-1zM267 308h1v1h-1zM286 308h1v1h-1zM304 308h1v1h-1zM322 308h1v1h-1zM340 308h1v1h-1zM358 308h1v1h-1zM376 308h1v1h-1zM394 308h2v1h-2zM413 308h1v1h-1zM431 308h1v1h-1zM449 308h1v1h-1zM467 308h1v1h-1zM485 308h1v1h-1zM503 308h1v1h-1zM522 308h1v1h-1zM540 308h1v1h-1zM558 308h1v1h-1zM576 308h2v1h-2zM594 308h1v1h-1zM612 308h1v1h-1zM631 308h1v1h-1zM649 308h1v1h-1zM667 308h1v1h-1zM685 308h1v1h-1zM703 308h1v1h-1zM721 308h1v1h-1zM740 308h1v1h-1zM757 308h2v1h-2zM776 308h1v1h-1zM794 308h1v1h-1zM812 308h1v1h-1zM830 308h1v1h-1zM848 308h1v1h-1zM867 308h1v1h-1zM885 308h1v1h-1zM903 308h1v1h-1zM921 308h1v1h-1zM939 308h2v1h-2zM957 308h1v1h-1zM976 308h1v1h-1zM994 308h1v1h-1zM1012 308h1v1h-1zM1030 308h1v1h-1zM1048 308h1v1h-1zM1066 308h1v1h-1zM1085 308h1v1h-1zM1103 308h1v1h-1zM1120 308h2v1h-2zM1139 308h1v1h-1zM1157 308h1v1h-1zM1175 308h1v1h-1zM1194 308h1v1h-1zM1212 308h1v1h-1zM1230 308h1v1h-1zM1248 308h1v1h-1zM1266 308h1v1h-1zM1284 308h1v1h-1zM1302 308h2v1h-2zM1321 308h1v1h-1zM1339 308h1v1h-1zM1357 308h1v1h-1zM1375 308h1v1h-1zM1393 308h1v1h-1zM1411 308h1v1h-1zM1430 308h1v1h-1zM1448 308h1v1h-1zM1466 308h1v1h-1zM1484 308h2v1h-2zM1502 308h1v1h-1zM1520 308h1v1h-1zM1539 308h1v1h-1zM1557 308h1v1h-1zM1575 308h1v1h-1zM13 326h1v1h-1zM31 326h2v1h-2zM49 326h1v1h-1zM68 326h1v1h-1zM86 326h1v1h-1zM104 326h1v1h-1zM122 326h1v1h-1zM140 326h1v1h-1zM158 326h1v1h-1zM177 326h1v1h-1zM195 326h1v1h-1zM212 326h2v1h-2zM231 326h1v1h-1zM249 326h1v1h-1zM267 326h1v1h-1zM286 326h1v1h-1zM304 326h1v1h-1zM322 326h1v1h-1zM340 326h1v1h-1zM358 326h1v1h-1zM376 326h1v1h-1zM394 326h2v1h-2zM413 326h1v1h-1zM431 326h1v1h-1zM449 326h1v1h-1zM467 326h1v1h-1zM485 326h1v1h-1zM503 326h1v1h-1zM522 326h1v1h-1zM540 326h1v1h-1zM558 326h1v1h-1zM576 326h2v1h-2zM594 326h1v1h-1zM612 326h1v1h-1zM631 326h1v1h-1zM649 326h1v1h-1zM667 326h1v1h-1zM685 326h1v1h-1zM703 326h1v1h-1zM721 326h1v1h-1zM740 326h1v1h-1zM757 326h2v1h-2zM776 326h1v1h-1zM794 326h1v1h-1zM812 326h1v1h-1zM830 326h1v1h-1zM848 326h1v1h-1zM867 326h1v1h-1zM885 326h1v1h-1zM903 326h1v1h-1zM921 326h1v1h-1zM939 326h2v1h-2zM957 326h1v1h-1zM976 326h1v1h-1zM994 326h1v1h-1zM1012 326h1v1h-1zM1030 326h1v1h-1zM1048 326h1v1h-1zM1066 326h1v1h-1zM1085 326h1v1h-1zM1103 326h1v1h-1zM1120 326h2v1h-2zM1139 326h1v1h-1zM1157 326h1v1h-1zM1175 326h1v1h-1zM1194 326h1v1h-1zM1212 326h1v1h-1zM1230 326h1v1h-1zM1248 326h1v1h-1zM1266 326h1v1h-1zM1284 326h1v1h-1zM1302 326h2v1h-2zM1321 326h1v1h-1zM1339 326h1v1h-1zM1357 326h1v1h-1zM1375 326h1v1h-1zM1393 326h1v1h-1zM1411 326h1v1h-1zM1430 326h1v1h-1zM1448 326h1v1h-1zM1466 326h1v1h-1zM1484 326h2v1h-2zM1502 326h1v1h-1zM1520 326h1v1h-1zM1539 326h1v1h-1zM1557 326h1v1h-1zM1575 326h1v1h-1zM13 344h1v1h-1zM31 344h2v1h-2zM49 344h1v1h-1zM68 344h1v1h-1zM86 344h1v1h-1zM104 344h1v1h-1zM122 344h1v1h-1zM140 344h1v1h-1zM158 344h1v1h-1zM177 344h1v1h-1zM195 344h1v1h-1zM212 344h2v1h-2zM231 344h1v1h-1zM249 344h1v1h-1zM267 344h1v1h-1zM286 344h1v1h-1zM304 344h1v1h-1zM322 344h1v1h-1zM340 344h1v1h-1zM358 344h1v1h-1zM376 344h1v1h-1zM394 344h2v1h-2zM413 344h1v1h-1zM431 344h1v1h-1zM449 344h1v1h-1zM467 344h1v1h-1zM485 344h1v1h-1zM503 344h1v1h-1zM522 344h1v1h-1zM540 344h1v1h-1zM558 344h1v1h-1zM576 344h2v1h-2zM594 344h1v1h-1zM612 344h1v1h-1zM631 344h1v1h-1zM649 344h1v1h-1zM667 344h1v1h-1zM685 344h1v1h-1zM703 344h1v1h-1zM721 344h1v1h-1zM740 344h1v1h-1zM757 344h2v1h-2zM776 344h1v1h-1zM794 344h1v1h-1zM812 344h1v1h-1zM830 344h1v1h-1zM848 344h1v1h-1zM867 344h1v1h-1zM885 344h1v1h-1zM903 344h1v1h-1zM921 344h1v1h-1zM939 344h2v1h-2zM957 344h1v1h-1zM976 344h1v1h-1zM994 344h1v1h-1zM1012 344h1v1h-1zM1030 344h1v1h-1zM1048 344h1v1h-1zM1066 344h1v1h-1zM1085 344h1v1h-1zM1103 344h1v1h-1zM1120 344h2v1h-2zM1139 344h1v1h-1zM1157 344h1v1h-1zM1175 344h1v1h-1zM1194 344h1v1h-1zM1212 344h1v1h-1zM1230 344h1v1h-1zM1248 344h1v1h-1zM1266 344h1v1h-1zM1284 344h1v1h-1zM1302 344h2v1h-2zM1321 344h1v1h-1zM1339 344h1v1h-1zM1357 344h1v1h-1zM1375 344h1v1h-1zM1393 344h1v1h-1zM1411 344h1v1h-1zM1430 344h1v1h-1zM1448 344h1v1h-1zM1466 344h1v1h-1zM1484 344h2v1h-2zM1502 344h1v1h-1zM1520 344h1v1h-1zM1539 344h1v1h-1zM1557 344h1v1h-1zM1575 344h1v1h-1zM13 362h1v1h-1zM31 362h2v1h-2zM49 362h1v1h-1zM68 362h1v1h-1zM86 362h1v1h-1zM104 362h1v1h-1zM122 362h1v1h-1zM140 362h1v1h-1zM158 362h1v1h-1zM177 362h1v1h-1zM195 362h1v1h-1zM212 362h2v1h-2zM231 362h1v1h-1zM249 362h1v1h-1zM267 362h1v1h-1zM286 362h1v1h-1zM304 362h1v1h-1zM322 362h1v1h-1zM340 362h1v1h-1zM358 362h1v1h-1zM376 362h1v1h-1zM394 362h2v1h-2zM413 362h1v1h-1zM431 362h1v1h-1zM449 362h1v1h-1zM467 362h1v1h-1zM485 362h1v1h-1zM503 362h1v1h-1zM522 362h1v1h-1zM540 362h1v1h-1zM558 362h1v1h-1zM576 362h2v1h-2zM594 362h1v1h-1zM612 362h1v1h-1zM631 362h1v1h-1zM649 362h1v1h-1zM667 362h1v1h-1zM685 362h1v1h-1zM703 362h1v1h-1zM721 362h1v1h-1zM740 362h1v1h-1zM757 362h2v1h-2zM776 362h1v1h-1zM794 362h1v1h-1zM812 362h1v1h-1zM830 362h1v1h-1zM848 362h1v1h-1zM867 362h1v1h-1zM885 362h1v1h-1zM903 362h1v1h-1zM921 362h1v1h-1zM939 362h2v1h-2zM957 362h1v1h-1zM976 362h1v1h-1zM994 362h1v1h-1zM1012 362h1v1h-1zM1030 362h1v1h-1zM1048 362h1v1h-1zM1066 362h1v1h-1zM1085 362h1v1h-1zM1103 362h1v1h-1zM1120 362h2v1h-2zM1139 362h1v1h-1zM1157 362h1v1h-1zM1175 362h1v1h-1zM1194 362h1v1h-1zM1212 362h1v1h-1zM1230 362h1v1h-1zM1248 362h1v1h-1zM1266 362h1v1h-1zM1284 362h1v1h-1zM1302 362h2v1h-2zM1321 362h1v1h-1zM1339 362h1v1h-1zM1357 362h1v1h-1zM1375 362h1v1h-1zM1393 362h1v1h-1zM1411 362h1v1h-1zM1430 362h1v1h-1zM1448 362h1v1h-1zM1466 362h1v1h-1zM1484 362h2v1h-2zM1502 362h1v1h-1zM1520 362h1v1h-1zM1539 362h1v1h-1zM1557 362h1v1h-1zM1575 362h1v1h-1zM13 380h1v1h-1zM31 380h2v1h-2zM49 380h1v1h-1zM68 380h1v1h-1zM86 380h1v1h-1zM104 380h1v1h-1zM122 380h1v1h-1zM140 380h1v1h-1zM158 380h1v1h-1zM177 380h1v1h-1zM195 380h1v1h-1zM212 380h2v1h-2zM231 380h1v1h-1zM249 380h1v1h-1zM267 380h1v1h-1zM286 380h1v1h-1zM304 380h1v1h-1zM322 380h1v1h-1zM340 380h1v1h-1zM358 380h1v1h-1zM376 380h1v1h-1zM394 380h2v1h-2zM413 380h1v1h-1zM431 380h1v1h-1zM449 380h1v1h-1zM467 380h1v1h-1zM485 380h1v1h-1zM503 380h1v1h-1zM522 380h1v1h-1zM540 380h1v1h-1zM558 380h1v1h-1zM576 380h2v1h-2zM594 380h1v1h-1zM612 380h1v1h-1zM631 380h1v1h-1zM649 380h1v1h-1zM667 380h1v1h-1zM685 380h1v1h-1zM703 380h1v1h-1zM721 380h1v1h-1zM740 380h1v1h-1zM757 380h2v1h-2zM776 380h1v1h-1zM794 380h1v1h-1zM812 380h1v1h-1zM830 380h1v1h-1zM848 380h1v1h-1zM867 380h1v1h-1zM885 380h1v1h-1zM903 380h1v1h-1zM921 380h1v1h-1zM939 380h2v1h-2zM957 380h1v1h-1zM976 380h1v1h-1zM994 380h1v1h-1zM1012 380h1v1h-1zM1030 380h1v1h-1zM1048 380h1v1h-1zM1066 380h1v1h-1zM1085 380h1v1h-1zM1103 380h1v1h-1zM1120 380h2v1h-2zM1139 380h1v1h-1zM1157 380h1v1h-1zM1175 380h1v1h-1zM1194 380h1v1h-1zM1212 380h1v1h-1zM1230 380h1v1h-1zM1248 380h1v1h-1zM1266 380h1v1h-1zM1284 380h1v1h-1zM1302 380h2v1h-2zM1321 380h1v1h-1zM1339 380h1v1h-1zM1357 380h1v1h-1zM1375 380h1v1h-1zM1393 380h1v1h-1zM1411 380h1v1h-1zM1430 380h1v1h-1zM1448 380h1v1h-1zM1466 380h1v1h-1zM1484 380h2v1h-2zM1502 380h1v1h-1zM1520 380h1v1h-1zM1539 380h1v1h-1zM1557 380h1v1h-1zM1575 380h1v1h-1zM13 399h1v1h-1zM31 399h2v1h-2zM49 399h1v1h-1zM68 399h1v1h-1zM86 399h1v1h-1zM104 399h1v1h-1zM122 399h1v1h-1zM140 399h1v1h-1zM158 399h1v1h-1zM177 399h1v1h-1zM195 399h1v1h-1zM212 399h2v1h-2zM231 399h1v1h-1zM249 399h1v1h-1zM267 399h1v1h-1zM286 399h1v1h-1zM304 399h1v1h-1zM322 399h1v1h-1zM340 399h1v1h-1zM358 399h1v1h-1zM376 399h1v1h-1zM394 399h2v1h-2zM413 399h1v1h-1zM431 399h1v1h-1zM449 399h1v1h-1zM467 399h1v1h-1zM485 399h1v1h-1zM503 399h1v1h-1zM522 399h1v1h-1zM540 399h1v1h-1zM558 399h1v1h-1zM576 399h2v1h-2zM594 399h1v1h-1zM612 399h1v1h-1zM631 399h1v1h-1zM649 399h1v1h-1zM667 399h1v1h-1zM685 399h1v1h-1zM703 399h1v1h-1zM721 399h1v1h-1zM740 399h1v1h-1zM757 399h2v1h-2zM776 399h1v1h-1zM794 399h1v1h-1zM812 399h1v1h-1zM830 399h1v1h-1zM848 399h1v1h-1zM867 399h1v1h-1zM885 399h1v1h-1zM903 399h1v1h-1zM921 399h1v1h-1zM939 399h2v1h-2zM957 399h1v1h-1zM976 399h1v1h-1zM994 399h1v1h-1zM1012 399h1v1h-1zM1030 399h1v1h-1zM1048 399h1v1h-1zM1066 399h1v1h-1zM1085 399h1v1h-1zM1103 399h1v1h-1zM1120 399h2v1h-2zM1139 399h1v1h-1zM1157 399h1v1h-1zM1175 399h1v1h-1zM1194 399h1v1h-1zM1212 399h1v1h-1zM1230 399h1v1h-1zM1248 399h1v1h-1zM1266 399h1v1h-1zM1284 399h1v1h-1zM1302 399h2v1h-2zM1321 399h1v1h-1zM1339 399h1v1h-1zM1357 399h1v1h-1zM1375 399h1v1h-1zM1393 399h1v1h-1zM1411 399h1v1h-1zM1430 399h1v1h-1zM1448 399h1v1h-1zM1466 399h1v1h-1zM1484 399h2v1h-2zM1502 399h1v1h-1zM1520 399h1v1h-1zM1539 399h1v1h-1zM1557 399h1v1h-1zM1575 399h1v1h-1zM13 417h1v1h-1zM31 417h2v1h-2zM49 417h1v1h-1zM68 417h1v1h-1zM86 417h1v1h-1zM104 417h1v1h-1zM122 417h1v1h-1zM140 417h1v1h-1zM158 417h1v1h-1zM177 417h1v1h-1zM195 417h1v1h-1zM212 417h2v1h-2zM231 417h1v1h-1zM249 417h1v1h-1zM267 417h1v1h-1zM286 417h1v1h-1zM304 417h1v1h-1zM322 417h1v1h-1zM340 417h1v1h-1zM358 417h1v1h-1zM376 417h1v1h-1zM394 417h2v1h-2zM413 417h1v1h-1zM431 417h1v1h-1zM449 417h1v1h-1zM467 417h1v1h-1zM485 417h1v1h-1zM503 417h1v1h-1zM522 417h1v1h-1zM540 417h1v1h-1zM558 417h1v1h-1zM576 417h2v1h-2zM594 417h1v1h-1zM612 417h1v1h-1zM631 417h1v1h-1zM649 417h1v1h-1zM667 417h1v1h-1zM685 417h1v1h-1zM703 417h1v1h-1zM721 417h1v1h-1zM740 417h1v1h-1zM757 417h2v1h-2zM776 417h1v1h-1zM794 417h1v1h-1zM812 417h1v1h-1zM830 417h1v1h-1zM848 417h1v1h-1zM867 417h1v1h-1zM885 417h1v1h-1zM903 417h1v1h-1zM921 417h1v1h-1zM939 417h2v1h-2zM957 417h1v1h-1zM976 417h1v1h-1zM994 417h1v1h-1zM1012 417h1v1h-1zM1030 417h1v1h-1zM1048 417h1v1h-1zM1066 417h1v1h-1zM1085 417h1v1h-1zM1103 417h1v1h-1zM1120 417h2v1h-2zM1139 417h1v1h-1zM1157 417h1v1h-1zM1175 417h1v1h-1zM1194 417h1v1h-1zM1212 417h1v1h-1zM1230 417h1v1h-1zM1248 417h1v1h-1zM1266 417h1v1h-1zM1284 417h1v1h-1zM1302 417h2v1h-2zM1321 417h1v1h-1zM1339 417h1v1h-1zM1357 417h1v1h-1zM1375 417h1v1h-1zM1393 417h1v1h-1zM1411 417h1v1h-1zM1430 417h1v1h-1zM1448 417h1v1h-1zM1466 417h1v1h-1zM1484 417h2v1h-2zM1502 417h1v1h-1zM1520 417h1v1h-1zM1539 417h1v1h-1zM1557 417h1v1h-1zM1575 417h1v1h-1zM13 435h1v1h-1zM31 435h2v1h-2zM49 435h1v1h-1zM68 435h1v1h-1zM86 435h1v1h-1zM104 435h1v1h-1zM122 435h1v1h-1zM140 435h1v1h-1zM158 435h1v1h-1zM177 435h1v1h-1zM195 435h1v1h-1zM212 435h2v1h-2zM231 435h1v1h-1zM249 435h1v1h-1zM267 435h1v1h-1zM286 435h1v1h-1zM304 435h1v1h-1zM322 435h1v1h-1zM340 435h1v1h-1zM358 435h1v1h-1zM376 435h1v1h-1zM394 435h2v1h-2zM413 435h1v1h-1zM431 435h1v1h-1zM449 435h1v1h-1zM467 435h1v1h-1zM485 435h1v1h-1zM503 435h1v1h-1zM522 435h1v1h-1zM540 435h1v1h-1zM558 435h1v1h-1zM576 435h2v1h-2zM594 435h1v1h-1zM612 435h1v1h-1zM631 435h1v1h-1zM649 435h1v1h-1zM667 435h1v1h-1zM685 435h1v1h-1zM703 435h1v1h-1zM721 435h1v1h-1zM740 435h1v1h-1zM757 435h2v1h-2zM776 435h1v1h-1zM794 435h1v1h-1zM812 435h1v1h-1zM830 435h1v1h-1zM848 435h1v1h-1zM867 435h1v1h-1zM885 435h1v1h-1zM903 435h1v1h-1zM921 435h1v1h-1zM939 435h2v1h-2zM957 435h1v1h-1zM976 435h1v1h-1zM994 435h1v1h-1zM1012 435h1v1h-1zM1030 435h1v1h-1zM1048 435h1v1h-1zM1066 435h1v1h-1zM1085 435h1v1h-1zM1103 435h1v1h-1zM1120 435h2v1h-2zM1139 435h1v1h-1zM1157 435h1v1h-1zM1175 435h1v1h-1zM1194 435h1v1h-1zM1212 435h1v1h-1zM1230 435h1v1h-1zM1248 435h1v1h-1zM1266 435h1v1h-1zM1284 435h1v1h-1zM1302 435h2v1h-2zM1321 435h1v1h-1zM1339 435h1v1h-1zM1357 435h1v1h-1zM1375 435h1v1h-1zM1393 435h1v1h-1zM1411 435h1v1h-1zM1430 435h1v1h-1zM1448 435h1v1h-1zM1466 435h1v1h-1zM1484 435h2v1h-2zM1502 435h1v1h-1zM1520 435h1v1h-1zM1539 435h1v1h-1zM1557 435h1v1h-1zM1575 435h1v1h-1zM13 453h1v1h-1zM31 453h2v1h-2zM49 453h1v1h-1zM68 453h1v1h-1zM86 453h1v1h-1zM104 453h1v1h-1zM122 453h1v1h-1zM140 453h1v1h-1zM158 453h1v1h-1zM177 453h1v1h-1zM195 453h1v1h-1zM212 453h2v1h-2zM231 453h1v1h-1zM249 453h1v1h-1zM267 453h1v1h-1zM286 453h1v1h-1zM304 453h1v1h-1zM322 453h1v1h-1zM340 453h1v1h-1zM358 453h1v1h-1zM376 453h1v1h-1zM394 453h2v1h-2zM413 453h1v1h-1zM431 453h1v1h-1zM449 453h1v1h-1zM467 453h1v1h-1zM485 453h1v1h-1zM503 453h1v1h-1zM522 453h1v1h-1zM540 453h1v1h-1zM558 453h1v1h-1zM576 453h2v1h-2zM594 453h1v1h-1zM612 453h1v1h-1zM631 453h1v1h-1zM649 453h1v1h-1zM667 453h1v1h-1zM685 453h1v1h-1zM703 453h1v1h-1zM721 453h1v1h-1zM740 453h1v1h-1zM757 453h2v1h-2zM776 453h1v1h-1zM794 453h1v1h-1zM812 453h1v1h-1zM830 453h1v1h-1zM848 453h1v1h-1zM867 453h1v1h-1zM885 453h1v1h-1zM903 453h1v1h-1zM921 453h1v1h-1zM939 453h2v1h-2zM957 453h1v1h-1zM976 453h1v1h-1zM994 453h1v1h-1zM1012 453h1v1h-1zM1030 453h1v1h-1zM1048 453h1v1h-1zM1066 453h1v1h-1zM1085 453h1v1h-1zM1103 453h1v1h-1zM1120 453h2v1h-2zM1139 453h1v1h-1zM1157 453h1v1h-1zM1175 453h1v1h-1zM1194 453h1v1h-1zM1212 453h1v1h-1zM1230 453h1v1h-1zM1248 453h1v1h-1zM1266 453h1v1h-1zM1284 453h1v1h-1zM1302 453h2v1h-2zM1321 453h1v1h-1zM1339 453h1v1h-1zM1357 453h1v1h-1zM1375 453h1v1h-1zM1393 453h1v1h-1zM1411 453h1v1h-1zM1430 453h1v1h-1zM1448 453h1v1h-1zM1466 453h1v1h-1zM1484 453h2v1h-2zM1502 453h1v1h-1zM1520 453h1v1h-1zM1539 453h1v1h-1zM1557 453h1v1h-1zM1575 453h1v1h-1zM13 471h1v2h-1zM31 471h2v2h-2zM49 471h1v2h-1zM68 471h1v2h-1zM86 471h1v2h-1zM104 471h1v2h-1zM122 471h1v2h-1zM140 471h1v2h-1zM158 471h1v2h-1zM177 471h1v2h-1zM195 471h1v2h-1zM212 471h2v2h-2zM231 471h1v2h-1zM249 471h1v2h-1zM267 471h1v2h-1zM286 471h1v2h-1zM304 471h1v2h-1zM322 471h1v2h-1zM340 471h1v2h-1zM358 471h1v2h-1zM376 471h1v2h-1zM394 471h2v2h-2zM413 471h1v2h-1zM431 471h1v2h-1zM449 471h1v2h-1zM467 471h1v2h-1zM485 471h1v2h-1zM503 471h1v2h-1zM522 471h1v2h-1zM540 471h1v2h-1zM558 471h1v2h-1zM576 471h2v2h-2zM594 471h1v2h-1zM612 471h1v2h-1zM631 471h1v2h-1zM649 471h1v2h-1zM667 471h1v2h-1zM685 471h1v2h-1zM703 471h1v2h-1zM721 471h1v2h-1zM740 471h1v2h-1zM757 471h2v2h-2zM776 471h1v2h-1zM794 471h1v2h-1zM812 471h1v2h-1zM830 471h1v2h-1zM848 471h1v2h-1zM867 471h1v2h-1zM885 471h1v2h-1zM903 471h1v2h-1zM921 471h1v2h-1zM939 471h2v2h-2zM957 471h1v2h-1zM976 471h1v2h-1zM994 471h1v2h-1zM1012 471h1v2h-1zM1030 471h1v2h-1zM1048 471h1v2h-1zM1066 471h1v2h-1zM1085 471h1v2h-1zM1103 471h1v2h-1zM1120 471h2v2h-2zM1139 471h1v2h-1zM1157 471h1v2h-1zM1175 471h1v2h-1zM1194 471h1v2h-1zM1212 471h1v2h-1zM1230 471h1v2h-1zM1248 471h1v2h-1zM1266 471h1v2h-1zM1284 471h1v2h-1zM1302 471h2v2h-2zM1321 471h1v2h-1zM1339 471h1v2h-1zM1357 471h1v2h-1zM1375 471h1v2h-1zM1393 471h1v2h-1zM1411 471h1v2h-1zM1430 471h1v2h-1zM1448 471h1v2h-1zM1466 471h1v2h-1zM1484 471h2v2h-2zM1502 471h1v2h-1zM1520 471h1v2h-1zM1539 471h1v2h-1zM1557 471h1v2h-1zM1575 471h1v2h-1zM13 489h1v1h-1zM31 489h2v1h-2zM49 489h1v1h-1zM68 489h1v1h-1zM86 489h1v1h-1zM104 489h1v1h-1zM122 489h1v1h-1zM140 489h1v1h-1zM158 489h1v1h-1zM177 489h1v1h-1zM195 489h1v1h-1zM212 489h2v1h-2zM231 489h1v1h-1zM249 489h1v1h-1zM267 489h1v1h-1zM286 489h1v1h-1zM304 489h1v1h-1zM322 489h1v1h-1zM340 489h1v1h-1zM358 489h1v1h-1zM376 489h1v1h-1zM394 489h2v1h-2zM413 489h1v1h-1zM431 489h1v1h-1zM449 489h1v1h-1zM467 489h1v1h-1zM485 489h1v1h-1zM503 489h1v1h-1zM522 489h1v1h-1zM540 489h1v1h-1zM558 489h1v1h-1zM576 489h2v1h-2zM594 489h1v1h-1zM612 489h1v1h-1zM631 489h1v1h-1zM649 489h1v1h-1zM667 489h1v1h-1zM685 489h1v1h-1zM703 489h1v1h-1zM721 489h1v1h-1zM740 489h1v1h-1zM757 489h2v1h-2zM776 489h1v1h-1zM794 489h1v1h-1zM812 489h1v1h-1zM830 489h1v1h-1zM848 489h1v1h-1zM867 489h1v1h-1zM885 489h1v1h-1zM903 489h1v1h-1zM921 489h1v1h-1zM939 489h2v1h-2zM957 489h1v1h-1zM976 489h1v1h-1zM994 489h1v1h-1zM1012 489h1v1h-1zM1030 489h1v1h-1zM1048 489h1v1h-1zM1066 489h1v1h-1zM1085 489h1v1h-1zM1103 489h1v1h-1zM1120 489h2v1h-2zM1139 489h1v1h-1zM1157 489h1v1h-1zM1175 489h1v1h-1zM1194 489h1v1h-1zM1212 489h1v1h-1zM1230 489h1v1h-1zM1248 489h1v1h-1zM1266 489h1v1h-1zM1284 489h1v1h-1zM1302 489h2v1h-2zM1321 489h1v1h-1zM1339 489h1v1h-1zM1357 489h1v1h-1zM1375 489h1v1h-1zM1393 489h1v1h-1zM1411 489h1v1h-1zM1430 489h1v1h-1zM1448 489h1v1h-1zM1466 489h1v1h-1zM1484 489h2v1h-2zM1502 489h1v1h-1zM1520 489h1v1h-1zM1539 489h1v1h-1zM1557 489h1v1h-1zM1575 489h1v1h-1zM13 508h1v1h-1zM31 508h2v1h-2zM49 508h1v1h-1zM68 508h1v1h-1zM86 508h1v1h-1zM104 508h1v1h-1zM122 508h1v1h-1zM140 508h1v1h-1zM158 508h1v1h-1zM177 508h1v1h-1zM195 508h1v1h-1zM212 508h2v1h-2zM231 508h1v1h-1zM249 508h1v1h-1zM267 508h1v1h-1zM286 508h1v1h-1zM304 508h1v1h-1zM322 508h1v1h-1zM340 508h1v1h-1zM358 508h1v1h-1zM376 508h1v1h-1zM394 508h2v1h-2zM413 508h1v1h-1zM431 508h1v1h-1zM449 508h1v1h-1zM467 508h1v1h-1zM485 508h1v1h-1zM503 508h1v1h-1zM522 508h1v1h-1zM540 508h1v1h-1zM558 508h1v1h-1zM576 508h2v1h-2zM594 508h1v1h-1zM612 508h1v1h-1zM631 508h1v1h-1zM649 508h1v1h-1zM667 508h1v1h-1zM685 508h1v1h-1zM703 508h1v1h-1zM721 508h1v1h-1zM740 508h1v1h-1zM757 508h2v1h-2zM776 508h1v1h-1zM794 508h1v1h-1zM812 508h1v1h-1zM830 508h1v1h-1zM848 508h1v1h-1zM867 508h1v1h-1zM885 508h1v1h-1zM903 508h1v1h-1zM921 508h1v1h-1zM939 508h2v1h-2zM957 508h1v1h-1zM976 508h1v1h-1zM994 508h1v1h-1zM1012 508h1v1h-1zM1030 508h1v1h-1zM1048 508h1v1h-1zM1066 508h1v1h-1zM1085 508h1v1h-1zM1103 508h1v1h-1zM1120 508h2v1h-2zM1139 508h1v1h-1zM1157 508h1v1h-1zM1175 508h1v1h-1zM1194 508h1v1h-1zM1212 508h1v1h-1zM1230 508h1v1h-1zM1248 508h1v1h-1zM1266 508h1v1h-1zM1284 508h1v1h-1zM1302 508h2v1h-2zM1321 508h1v1h-1zM1339 508h1v1h-1zM1357 508h1v1h-1zM1375 508h1v1h-1zM1393 508h1v1h-1zM1411 508h1v1h-1zM1430 508h1v1h-1zM1448 508h1v1h-1zM1466 508h1v1h-1zM1484 508h2v1h-2zM1502 508h1v1h-1zM1520 508h1v1h-1zM1539 508h1v1h-1zM1557 508h1v1h-1zM1575 508h1v1h-1zM13 526h1v1h-1zM31 526h2v1h-2zM49 526h1v1h-1zM68 526h1v1h-1zM86 526h1v1h-1zM104 526h1v1h-1zM122 526h1v1h-1zM140 526h1v1h-1zM158 526h1v1h-1zM177 526h1v1h-1zM195 526h1v1h-1zM212 526h2v1h-2zM231 526h1v1h-1zM249 526h1v1h-1zM267 526h1v1h-1zM286 526h1v1h-1zM304 526h1v1h-1zM322 526h1v1h-1zM340 526h1v1h-1zM358 526h1v1h-1zM376 526h1v1h-1zM394 526h2v1h-2zM413 526h1v1h-1zM431 526h1v1h-1zM449 526h1v1h-1zM467 526h1v1h-1zM485 526h1v1h-1zM503 526h1v1h-1zM522 526h1v1h-1zM540 526h1v1h-1zM558 526h1v1h-1zM576 526h2v1h-2zM594 526h1v1h-1zM612 526h1v1h-1zM631 526h1v1h-1zM649 526h1v1h-1zM667 526h1v1h-1zM685 526h1v1h-1zM703 526h1v1h-1zM721 526h1v1h-1zM740 526h1v1h-1zM757 526h2v1h-2zM776 526h1v1h-1zM794 526h1v1h-1zM812 526h1v1h-1zM830 526h1v1h-1zM848 526h1v1h-1zM867 526h1v1h-1zM885 526h1v1h-1zM903 526h1v1h-1zM921 526h1v1h-1zM939 526h2v1h-2zM957 526h1v1h-1zM976 526h1v1h-1zM994 526h1v1h-1zM1012 526h1v1h-1zM1030 526h1v1h-1zM1048 526h1v1h-1zM1066 526h1v1h-1zM1085 526h1v1h-1zM1103 526h1v1h-1zM1120 526h2v1h-2zM1139 526h1v1h-1zM1157 526h1v1h-1zM1175 526h1v1h-1zM1194 526h1v1h-1zM1212 526h1v1h-1zM1230 526h1v1h-1zM1248 526h1v1h-1zM1266 526h1v1h-1zM1284 526h1v1h-1zM1302 526h2v1h-2zM1321 526h1v1h-1zM1339 526h1v1h-1zM1357 526h1v1h-1zM1375 526h1v1h-1zM1393 526h1v1h-1zM1411 526h1v1h-1zM1430 526h1v1h-1zM1448 526h1v1h-1zM1466 526h1v1h-1zM1484 526h2v1h-2zM1502 526h1v1h-1zM1520 526h1v1h-1zM1539 526h1v1h-1zM1557 526h1v1h-1zM1575 526h1v1h-1zM13 544h1v1h-1zM31 544h2v1h-2zM49 544h1v1h-1zM68 544h1v1h-1zM86 544h1v1h-1zM104 544h1v1h-1zM122 544h1v1h-1zM140 544h1v1h-1zM158 544h1v1h-1zM177 544h1v1h-1zM195 544h1v1h-1zM212 544h2v1h-2zM231 544h1v1h-1zM249 544h1v1h-1zM267 544h1v1h-1zM286 544h1v1h-1zM304 544h1v1h-1zM322 544h1v1h-1zM340 544h1v1h-1zM358 544h1v1h-1zM376 544h1v1h-1zM394 544h2v1h-2zM413 544h1v1h-1zM431 544h1v1h-1zM449 544h1v1h-1zM467 544h1v1h-1zM485 544h1v1h-1zM503 544h1v1h-1zM522 544h1v1h-1zM540 544h1v1h-1zM558 544h1v1h-1zM576 544h2v1h-2zM594 544h1v1h-1zM612 544h1v1h-1zM631 544h1v1h-1zM649 544h1v1h-1zM667 544h1v1h-1zM685 544h1v1h-1zM703 544h1v1h-1zM721 544h1v1h-1zM740 544h1v1h-1zM757 544h2v1h-2zM776 544h1v1h-1zM794 544h1v1h-1zM812 544h1v1h-1zM830 544h1v1h-1zM848 544h1v1h-1zM867 544h1v1h-1zM885 544h1v1h-1zM903 544h1v1h-1zM921 544h1v1h-1zM939 544h2v1h-2zM957 544h1v1h-1zM976 544h1v1h-1zM994 544h1v1h-1zM1012 544h1v1h-1zM1030 544h1v1h-1zM1048 544h1v1h-1zM1066 544h1v1h-1zM1085 544h1v1h-1zM1103 544h1v1h-1zM1120 544h2v1h-2zM1139 544h1v1h-1zM1157 544h1v1h-1zM1175 544h1v1h-1zM1194 544h1v1h-1zM1212 544h1v1h-1zM1230 544h1v1h-1zM1248 544h1v1h-1zM1266 544h1v1h-1zM1284 544h1v1h-1zM1302 544h2v1h-2zM1321 544h1v1h-1zM1339 544h1v1h-1zM1357 544h1v1h-1zM1375 544h1v1h-1zM1393 544h1v1h-1zM1411 544h1v1h-1zM1430 544h1v1h-1zM1448 544h1v1h-1zM1466 544h1v1h-1zM1484 544h2v1h-2zM1502 544h1v1h-1zM1520 544h1v1h-1zM1539 544h1v1h-1zM1557 544h1v1h-1zM1575 544h1v1h-1zM13 562h1v1h-1zM31 562h2v1h-2zM49 562h1v1h-1zM68 562h1v1h-1zM86 562h1v1h-1zM104 562h1v1h-1zM122 562h1v1h-1zM140 562h1v1h-1zM158 562h1v1h-1zM177 562h1v1h-1zM195 562h1v1h-1zM212 562h2v1h-2zM231 562h1v1h-1zM249 562h1v1h-1zM267 562h1v1h-1zM286 562h1v1h-1zM304 562h1v1h-1zM322 562h1v1h-1zM340 562h1v1h-1zM358 562h1v1h-1zM376 562h1v1h-1zM394 562h2v1h-2zM413 562h1v1h-1zM431 562h1v1h-1zM449 562h1v1h-1zM467 562h1v1h-1zM485 562h1v1h-1zM503 562h1v1h-1zM522 562h1v1h-1zM540 562h1v1h-1zM558 562h1v1h-1zM576 562h2v1h-2zM594 562h1v1h-1zM612 562h1v1h-1zM631 562h1v1h-1zM649 562h1v1h-1zM667 562h1v1h-1zM685 562h1v1h-1zM703 562h1v1h-1zM721 562h1v1h-1zM740 562h1v1h-1zM757 562h2v1h-2zM776 562h1v1h-1zM794 562h1v1h-1zM812 562h1v1h-1zM830 562h1v1h-1zM848 562h1v1h-1zM867 562h1v1h-1zM885 562h1v1h-1zM903 562h1v1h-1zM921 562h1v1h-1zM939 562h2v1h-2zM957 562h1v1h-1zM976 562h1v1h-1zM994 562h1v1h-1zM1012 562h1v1h-1zM1030 562h1v1h-1zM1048 562h1v1h-1zM1066 562h1v1h-1zM1085 562h1v1h-1zM1103 562h1v1h-1zM1120 562h2v1h-2zM1139 562h1v1h-1zM1157 562h1v1h-1zM1175 562h1v1h-1zM1194 562h1v1h-1zM1212 562h1v1h-1zM1230 562h1v1h-1zM1248 562h1v1h-1zM1266 562h1v1h-1zM1284 562h1v1h-1zM1302 562h2v1h-2zM1321 562h1v1h-1zM1339 562h1v1h-1zM1357 562h1v1h-1zM1375 562h1v1h-1zM1393 562h1v1h-1zM1411 562h1v1h-1zM1430 562h1v1h-1zM1448 562h1v1h-1zM1466 562h1v1h-1zM1484 562h2v1h-2zM1502 562h1v1h-1zM1520 562h1v1h-1zM1539 562h1v1h-1zM1557 562h1v1h-1zM1575 562h1v1h-1zM13 580h1v1h-1zM31 580h2v1h-2zM49 580h1v1h-1zM68 580h1v1h-1zM86 580h1v1h-1zM104 580h1v1h-1zM122 580h1v1h-1zM140 580h1v1h-1zM158 580h1v1h-1zM177 580h1v1h-1zM195 580h1v1h-1zM212 580h2v1h-2zM231 580h1v1h-1zM249 580h1v1h-1zM267 580h1v1h-1zM286 580h1v1h-1zM304 580h1v1h-1zM322 580h1v1h-1zM340 580h1v1h-1zM358 580h1v1h-1zM376 580h1v1h-1zM394 580h2v1h-2zM413 580h1v1h-1zM431 580h1v1h-1zM449 580h1v1h-1zM467 580h1v1h-1zM485 580h1v1h-1zM503 580h1v1h-1zM522 580h1v1h-1zM540 580h1v1h-1zM558 580h1v1h-1zM576 580h2v1h-2zM594 580h1v1h-1zM612 580h1v1h-1zM631 580h1v1h-1zM649 580h1v1h-1zM667 580h1v1h-1zM685 580h1v1h-1zM703 580h1v1h-1zM721 580h1v1h-1zM740 580h1v1h-1zM757 580h2v1h-2zM776 580h1v1h-1zM794 580h1v1h-1zM812 580h1v1h-1zM830 580h1v1h-1zM848 580h1v1h-1zM867 580h1v1h-1zM885 580h1v1h-1zM903 580h1v1h-1zM921 580h1v1h-1zM939 580h2v1h-2zM957 580h1v1h-1zM976 580h1v1h-1zM994 580h1v1h-1zM1012 580h1v1h-1zM1030 580h1v1h-1zM1048 580h1v1h-1zM1066 580h1v1h-1zM1085 580h1v1h-1zM1103 580h1v1h-1zM1120 580h2v1h-2zM1139 580h1v1h-1zM1157 580h1v1h-1zM1175 580h1v1h-1zM1194 580h1v1h-1zM1212 580h1v1h-1zM1230 580h1v1h-1zM1248 580h1v1h-1zM1266 580h1v1h-1zM1284 580h1v1h-1zM1302 580h2v1h-2zM1321 580h1v1h-1zM1339 580h1v1h-1zM1357 580h1v1h-1zM1375 580h1v1h-1zM1393 580h1v1h-1zM1411 580h1v1h-1zM1430 580h1v1h-1zM1448 580h1v1h-1zM1466 580h1v1h-1zM1484 580h2v1h-2zM1502 580h1v1h-1zM1520 580h1v1h-1zM1539 580h1v1h-1zM1557 580h1v1h-1zM1575 580h1v1h-1zM13 598h1v1h-1zM31 598h2v1h-2zM49 598h1v1h-1zM68 598h1v1h-1zM86 598h1v1h-1zM104 598h1v1h-1zM122 598h1v1h-1zM140 598h1v1h-1zM158 598h1v1h-1zM177 598h1v1h-1zM195 598h1v1h-1zM212 598h2v1h-2zM231 598h1v1h-1zM249 598h1v1h-1zM267 598h1v1h-1zM286 598h1v1h-1zM304 598h1v1h-1zM322 598h1v1h-1zM340 598h1v1h-1zM358 598h1v1h-1zM376 598h1v1h-1zM394 598h2v1h-2zM413 598h1v1h-1zM431 598h1v1h-1zM449 598h1v1h-1zM467 598h1v1h-1zM485 598h1v1h-1zM503 598h1v1h-1zM522 598h1v1h-1zM540 598h1v1h-1zM558 598h1v1h-1zM576 598h2v1h-2zM594 598h1v1h-1zM612 598h1v1h-1zM631 598h1v1h-1zM649 598h1v1h-1zM667 598h1v1h-1zM685 598h1v1h-1zM703 598h1v1h-1zM721 598h1v1h-1zM740 598h1v1h-1zM757 598h2v1h-2zM776 598h1v1h-1zM794 598h1v1h-1zM812 598h1v1h-1zM830 598h1v1h-1zM848 598h1v1h-1zM867 598h1v1h-1zM885 598h1v1h-1zM903 598h1v1h-1zM921 598h1v1h-1zM939 598h2v1h-2zM957 598h1v1h-1zM976 598h1v1h-1zM994 598h1v1h-1zM1012 598h1v1h-1zM1030 598h1v1h-1zM1048 598h1v1h-1zM1066 598h1v1h-1zM1085 598h1v1h-1zM1103 598h1v1h-1zM1120 598h2v1h-2zM1139 598h1v1h-1zM1157 598h1v1h-1zM1175 598h1v1h-1zM1194 598h1v1h-1zM1212 598h1v1h-1zM1230 598h1v1h-1zM1248 598h1v1h-1zM1266 598h1v1h-1zM1284 598h1v1h-1zM1302 598h2v1h-2zM1321 598h1v1h-1zM1339 598h1v1h-1zM1357 598h1v1h-1zM1375 598h1v1h-1zM1393 598h1v1h-1zM1411 598h1v1h-1zM1430 598h1v1h-1zM1448 598h1v1h-1zM1466 598h1v1h-1zM1484 598h2v1h-2zM1502 598h1v1h-1zM1520 598h1v1h-1zM1539 598h1v1h-1zM1557 598h1v1h-1zM1575 598h1v1h-1zM13 616h1v1h-1zM31 616h2v1h-2zM49 616h1v1h-1zM68 616h1v1h-1zM86 616h1v1h-1zM104 616h1v1h-1zM122 616h1v1h-1zM140 616h1v1h-1zM158 616h1v1h-1zM177 616h1v1h-1zM195 616h1v1h-1zM212 616h2v1h-2zM231 616h1v1h-1zM249 616h1v1h-1zM267 616h1v1h-1zM286 616h1v1h-1zM304 616h1v1h-1zM322 616h1v1h-1zM340 616h1v1h-1zM358 616h1v1h-1zM376 616h1v1h-1zM394 616h2v1h-2zM413 616h1v1h-1zM431 616h1v1h-1zM449 616h1v1h-1zM467 616h1v1h-1zM485 616h1v1h-1zM503 616h1v1h-1zM522 616h1v1h-1zM540 616h1v1h-1zM558 616h1v1h-1zM576 616h2v1h-2zM594 616h1v1h-1zM612 616h1v1h-1zM631 616h1v1h-1zM649 616h1v1h-1zM667 616h1v1h-1zM685 616h1v1h-1zM703 616h1v1h-1zM721 616h1v1h-1zM740 616h1v1h-1zM757 616h2v1h-2zM776 616h1v1h-1zM794 616h1v1h-1zM812 616h1v1h-1zM830 616h1v1h-1zM848 616h1v1h-1zM867 616h1v1h-1zM885 616h1v1h-1zM903 616h1v1h-1zM921 616h1v1h-1zM939 616h2v1h-2zM957 616h1v1h-1zM976 616h1v1h-1zM994 616h1v1h-1zM1012 616h1v1h-1zM1030 616h1v1h-1zM1048 616h1v1h-1zM1066 616h1v1h-1zM1085 616h1v1h-1zM1103 616h1v1h-1zM1120 616h2v1h-2zM1139 616h1v1h-1zM1157 616h1v1h-1zM1175 616h1v1h-1zM1194 616h1v1h-1zM1212 616h1v1h-1zM1230 616h1v1h-1zM1248 616h1v1h-1zM1266 616h1v1h-1zM1284 616h1v1h-1zM1302 616h2v1h-2zM1321 616h1v1h-1zM1339 616h1v1h-1zM1357 616h1v1h-1zM1375 616h1v1h-1zM1393 616h1v1h-1zM1411 616h1v1h-1zM1430 616h1v1h-1zM1448 616h1v1h-1zM1466 616h1v1h-1zM1484 616h2v1h-2zM1502 616h1v1h-1zM1520 616h1v1h-1zM1539 616h1v1h-1zM1557 616h1v1h-1zM1575 616h1v1h-1zM13 635h1v1h-1zM31 635h2v1h-2zM49 635h1v1h-1zM68 635h1v1h-1zM86 635h1v1h-1zM104 635h1v1h-1zM122 635h1v1h-1zM140 635h1v1h-1zM158 635h1v1h-1zM177 635h1v1h-1zM195 635h1v1h-1zM212 635h2v1h-2zM231 635h1v1h-1zM249 635h1v1h-1zM267 635h1v1h-1zM286 635h1v1h-1zM304 635h1v1h-1zM322 635h1v1h-1zM340 635h1v1h-1zM358 635h1v1h-1zM376 635h1v1h-1zM394 635h2v1h-2zM413 635h1v1h-1zM431 635h1v1h-1zM449 635h1v1h-1zM467 635h1v1h-1zM485 635h1v1h-1zM503 635h1v1h-1zM522 635h1v1h-1zM540 635h1v1h-1zM558 635h1v1h-1zM576 635h2v1h-2zM594 635h1v1h-1zM612 635h1v1h-1zM631 635h1v1h-1zM649 635h1v1h-1zM667 635h1v1h-1zM685 635h1v1h-1zM703 635h1v1h-1zM721 635h1v1h-1zM740 635h1v1h-1zM757 635h2v1h-2zM776 635h1v1h-1zM794 635h1v1h-1zM812 635h1v1h-1zM830 635h1v1h-1zM848 635h1v1h-1zM867 635h1v1h-1zM885 635h1v1h-1zM903 635h1v1h-1zM921 635h1v1h-1zM939 635h2v1h-2zM957 635h1v1h-1zM976 635h1v1h-1zM994 635h1v1h-1zM1012 635h1v1h-1zM1030 635h1v1h-1zM1048 635h1v1h-1zM1066 635h1v1h-1zM1085 635h1v1h-1zM1103 635h1v1h-1zM1120 635h2v1h-2zM1139 635h1v1h-1zM1157 635h1v1h-1zM1175 635h1v1h-1zM1194 635h1v1h-1zM1212 635h1v1h-1zM1230 635h1v1h-1zM1248 635h1v1h-1zM1266 635h1v1h-1zM1284 635h1v1h-1zM1302 635h2v1h-2zM1321 635h1v1h-1zM1339 635h1v1h-1zM1357 635h1v1h-1zM1375 635h1v1h-1zM1393 635h1v1h-1zM1411 635h1v1h-1zM1430 635h1v1h-1zM1448 635h1v1h-1zM1466 635h1v1h-1zM1484 635h2v1h-2zM1502 635h1v1h-1zM1520 635h1v1h-1zM1539 635h1v1h-1zM1557 635h1v1h-1zM1575 635h1v1h-1zM13 652h1v2h-1zM31 652h2v2h-2zM49 652h1v2h-1zM68 652h1v2h-1zM86 652h1v2h-1zM104 652h1v2h-1zM122 652h1v2h-1zM140 652h1v2h-1zM158 652h1v2h-1zM177 652h1v2h-1zM195 652h1v2h-1zM212 652h2v2h-2zM231 652h1v2h-1zM249 652h1v2h-1zM267 652h1v2h-1zM286 652h1v2h-1zM304 652h1v2h-1zM322 652h1v2h-1zM340 652h1v2h-1zM358 652h1v2h-1zM376 652h1v2h-1zM394 652h2v2h-2zM413 652h1v2h-1zM431 652h1v2h-1zM449 652h1v2h-1zM467 652h1v2h-1zM485 652h1v2h-1zM503 652h1v2h-1zM522 652h1v2h-1zM540 652h1v2h-1zM558 652h1v2h-1zM576 652h2v2h-2zM594 652h1v2h-1zM612 652h1v2h-1zM631 652h1v2h-1zM649 652h1v2h-1zM667 652h1v2h-1zM685 652h1v2h-1zM703 652h1v2h-1zM721 652h1v2h-1zM740 652h1v2h-1zM757 652h2v2h-2zM776 652h1v2h-1zM794 652h1v2h-1zM812 652h1v2h-1zM830 652h1v2h-1zM848 652h1v2h-1zM867 652h1v2h-1zM885 652h1v2h-1zM903 652h1v2h-1zM921 652h1v2h-1zM939 652h2v2h-2zM957 652h1v2h-1zM976 652h1v2h-1zM994 652h1v2h-1zM1012 652h1v2h-1zM1030 652h1v2h-1zM1048 652h1v2h-1zM1066 652h1v2h-1zM1085 652h1v2h-1zM1103 652h1v2h-1zM1120 652h2v2h-2zM1139 652h1v2h-1zM1157 652h1v2h-1zM1175 652h1v2h-1zM1194 652h1v2h-1zM1212 652h1v2h-1zM1230 652h1v2h-1zM1248 652h1v2h-1zM1266 652h1v2h-1zM1284 652h1v2h-1zM1302 652h2v2h-2zM1321 652h1v2h-1zM1339 652h1v2h-1zM1357 652h1v2h-1zM1375 652h1v2h-1zM1393 652h1v2h-1zM1411 652h1v2h-1zM1430 652h1v2h-1zM1448 652h1v2h-1zM1466 652h1v2h-1zM1484 652h2v2h-2zM1502 652h1v2h-1zM1520 652h1v2h-1zM1539 652h1v2h-1zM1557 652h1v2h-1zM1575 652h1v2h-1zM13 671h1v1h-1zM31 671h2v1h-2zM49 671h1v1h-1zM68 671h1v1h-1zM86 671h1v1h-1zM104 671h1v1h-1zM122 671h1v1h-1zM140 671h1v1h-1zM158 671h1v1h-1zM177 671h1v1h-1zM195 671h1v1h-1zM212 671h2v1h-2zM231 671h1v1h-1zM249 671h1v1h-1zM267 671h1v1h-1zM286 671h1v1h-1zM304 671h1v1h-1zM322 671h1v1h-1zM340 671h1v1h-1zM358 671h1v1h-1zM376 671h1v1h-1zM394 671h2v1h-2zM413 671h1v1h-1zM431 671h1v1h-1zM449 671h1v1h-1zM467 671h1v1h-1zM485 671h1v1h-1zM503 671h1v1h-1zM522 671h1v1h-1zM540 671h1v1h-1zM558 671h1v1h-1zM576 671h2v1h-2zM594 671h1v1h-1zM612 671h1v1h-1zM631 671h1v1h-1zM649 671h1v1h-1zM667 671h1v1h-1zM685 671h1v1h-1zM703 671h1v1h-1zM721 671h1v1h-1zM740 671h1v1h-1zM757 671h2v1h-2zM776 671h1v1h-1zM794 671h1v1h-1zM812 671h1v1h-1zM830 671h1v1h-1zM848 671h1v1h-1zM867 671h1v1h-1zM885 671h1v1h-1zM903 671h1v1h-1zM921 671h1v1h-1zM939 671h2v1h-2zM957 671h1v1h-1zM976 671h1v1h-1zM994 671h1v1h-1zM1012 671h1v1h-1zM1030 671h1v1h-1zM1048 671h1v1h-1zM1066 671h1v1h-1zM1085 671h1v1h-1zM1103 671h1v1h-1zM1120 671h2v1h-2zM1139 671h1v1h-1zM1157 671h1v1h-1zM1175 671h1v1h-1zM1194 671h1v1h-1zM1212 671h1v1h-1zM1230 671h1v1h-1zM1248 671h1v1h-1zM1266 671h1v1h-1zM1284 671h1v1h-1zM1302 671h2v1h-2zM1321 671h1v1h-1zM1339 671h1v1h-1zM1357 671h1v1h-1zM1375 671h1v1h-1zM1393 671h1v1h-1zM1411 671h1v1h-1zM1430 671h1v1h-1zM1448 671h1v1h-1zM1466 671h1v1h-1zM1484 671h2v1h-2zM1502 671h1v1h-1zM1520 671h1v1h-1zM1539 671h1v1h-1zM1557 671h1v1h-1zM1575 671h1v1h-1zM13 689h1v1h-1zM31 689h2v1h-2zM49 689h1v1h-1zM68 689h1v1h-1zM86 689h1v1h-1zM104 689h1v1h-1zM122 689h1v1h-1zM140 689h1v1h-1zM158 689h1v1h-1zM177 689h1v1h-1zM195 689h1v1h-1zM212 689h2v1h-2zM231 689h1v1h-1zM249 689h1v1h-1zM267 689h1v1h-1zM286 689h1v1h-1zM304 689h1v1h-1zM322 689h1v1h-1zM340 689h1v1h-1zM358 689h1v1h-1zM376 689h1v1h-1zM394 689h2v1h-2zM413 689h1v1h-1zM431 689h1v1h-1zM449 689h1v1h-1zM467 689h1v1h-1zM485 689h1v1h-1zM503 689h1v1h-1zM522 689h1v1h-1zM540 689h1v1h-1zM558 689h1v1h-1zM576 689h2v1h-2zM594 689h1v1h-1zM612 689h1v1h-1zM631 689h1v1h-1zM649 689h1v1h-1zM667 689h1v1h-1zM685 689h1v1h-1zM703 689h1v1h-1zM721 689h1v1h-1zM740 689h1v1h-1zM757 689h2v1h-2zM776 689h1v1h-1zM794 689h1v1h-1zM812 689h1v1h-1zM830 689h1v1h-1zM848 689h1v1h-1zM867 689h1v1h-1zM885 689h1v1h-1zM903 689h1v1h-1zM921 689h1v1h-1zM939 689h2v1h-2zM957 689h1v1h-1zM976 689h1v1h-1zM994 689h1v1h-1zM1012 689h1v1h-1zM1030 689h1v1h-1zM1048 689h1v1h-1zM1066 689h1v1h-1zM1085 689h1v1h-1zM1103 689h1v1h-1zM1120 689h2v1h-2zM1139 689h1v1h-1zM1157 689h1v1h-1zM1175 689h1v1h-1zM1194 689h1v1h-1zM1212 689h1v1h-1zM1230 689h1v1h-1zM1248 689h1v1h-1zM1266 689h1v1h-1zM1284 689h1v1h-1zM1302 689h2v1h-2zM1321 689h1v1h-1zM1339 689h1v1h-1zM1357 689h1v1h-1zM1375 689h1v1h-1zM1393 689h1v1h-1zM1411 689h1v1h-1zM1430 689h1v1h-1zM1448 689h1v1h-1zM1466 689h1v1h-1zM1484 689h2v1h-2zM1502 689h1v1h-1zM1520 689h1v1h-1zM1539 689h1v1h-1zM1557 689h1v1h-1zM1575 689h1v1h-1zM13 707h1v1h-1zM31 707h2v1h-2zM49 707h1v1h-1zM68 707h1v1h-1zM86 707h1v1h-1zM104 707h1v1h-1zM122 707h1v1h-1zM140 707h1v1h-1zM158 707h1v1h-1zM177 707h1v1h-1zM195 707h1v1h-1zM212 707h2v1h-2zM231 707h1v1h-1zM249 707h1v1h-1zM267 707h1v1h-1zM286 707h1v1h-1zM304 707h1v1h-1zM322 707h1v1h-1zM340 707h1v1h-1zM358 707h1v1h-1zM376 707h1v1h-1zM394 707h2v1h-2zM413 707h1v1h-1zM431 707h1v1h-1zM449 707h1v1h-1zM467 707h1v1h-1zM485 707h1v1h-1zM503 707h1v1h-1zM522 707h1v1h-1zM540 707h1v1h-1zM558 707h1v1h-1zM576 707h2v1h-2zM594 707h1v1h-1zM612 707h1v1h-1zM631 707h1v1h-1zM649 707h1v1h-1zM667 707h1v1h-1zM685 707h1v1h-1zM703 707h1v1h-1zM721 707h1v1h-1zM740 707h1v1h-1zM757 707h2v1h-2zM776 707h1v1h-1zM794 707h1v1h-1zM812 707h1v1h-1zM830 707h1v1h-1zM848 707h1v1h-1zM867 707h1v1h-1zM885 707h1v1h-1zM903 707h1v1h-1zM921 707h1v1h-1zM939 707h2v1h-2zM957 707h1v1h-1zM976 707h1v1h-1zM994 707h1v1h-1zM1012 707h1v1h-1zM1030 707h1v1h-1zM1048 707h1v1h-1zM1066 707h1v1h-1zM1085 707h1v1h-1zM1103 707h1v1h-1zM1120 707h2v1h-2zM1139 707h1v1h-1zM1157 707h1v1h-1zM1175 707h1v1h-1zM1194 707h1v1h-1zM1212 707h1v1h-1zM1230 707h1v1h-1zM1248 707h1v1h-1zM1266 707h1v1h-1zM1284 707h1v1h-1zM1302 707h2v1h-2zM1321 707h1v1h-1zM1339 707h1v1h-1zM1357 707h1v1h-1zM1375 707h1v1h-1zM1393 707h1v1h-1zM1411 707h1v1h-1zM1430 707h1v1h-1zM1448 707h1v1h-1zM1466 707h1v1h-1zM1484 707h2v1h-2zM1502 707h1v1h-1zM1520 707h1v1h-1zM1539 707h1v1h-1zM1557 707h1v1h-1zM1575 707h1v1h-1zM13 725h1v1h-1zM31 725h2v1h-2zM49 725h1v1h-1zM68 725h1v1h-1zM86 725h1v1h-1zM104 725h1v1h-1zM122 725h1v1h-1zM140 725h1v1h-1zM158 725h1v1h-1zM177 725h1v1h-1zM195 725h1v1h-1zM212 725h2v1h-2zM231 725h1v1h-1zM249 725h1v1h-1zM267 725h1v1h-1zM286 725h1v1h-1zM304 725h1v1h-1zM322 725h1v1h-1zM340 725h1v1h-1zM358 725h1v1h-1zM376 725h1v1h-1zM394 725h2v1h-2zM413 725h1v1h-1zM431 725h1v1h-1zM449 725h1v1h-1zM467 725h1v1h-1zM485 725h1v1h-1zM503 725h1v1h-1zM522 725h1v1h-1zM540 725h1v1h-1zM558 725h1v1h-1zM576 725h2v1h-2zM594 725h1v1h-1zM612 725h1v1h-1zM631 725h1v1h-1zM649 725h1v1h-1zM667 725h1v1h-1zM685 725h1v1h-1zM703 725h1v1h-1zM721 725h1v1h-1zM740 725h1v1h-1zM757 725h2v1h-2zM776 725h1v1h-1zM794 725h1v1h-1zM812 725h1v1h-1zM830 725h1v1h-1zM848 725h1v1h-1zM867 725h1v1h-1zM885 725h1v1h-1zM903 725h1v1h-1zM921 725h1v1h-1zM939 725h2v1h-2zM957 725h1v1h-1zM976 725h1v1h-1zM994 725h1v1h-1zM1012 725h1v1h-1zM1030 725h1v1h-1zM1048 725h1v1h-1zM1066 725h1v1h-1zM1085 725h1v1h-1zM1103 725h1v1h-1zM1120 725h2v1h-2zM1139 725h1v1h-1zM1157 725h1v1h-1zM1175 725h1v1h-1zM1194 725h1v1h-1zM1212 725h1v1h-1zM1230 725h1v1h-1zM1248 725h1v1h-1zM1266 725h1v1h-1zM1284 725h1v1h-1zM1302 725h2v1h-2zM1321 725h1v1h-1zM1339 725h1v1h-1zM1357 725h1v1h-1zM1375 725h1v1h-1zM1393 725h1v1h-1zM1411 725h1v1h-1zM1430 725h1v1h-1zM1448 725h1v1h-1zM1466 725h1v1h-1zM1484 725h2v1h-2zM1502 725h1v1h-1zM1520 725h1v1h-1zM1539 725h1v1h-1zM1557 725h1v1h-1zM1575 725h1v1h-1zM13 744h1v1h-1zM31 744h2v1h-2zM49 744h1v1h-1zM68 744h1v1h-1zM86 744h1v1h-1zM104 744h1v1h-1zM122 744h1v1h-1zM140 744h1v1h-1zM158 744h1v1h-1zM177 744h1v1h-1zM195 744h1v1h-1zM212 744h2v1h-2zM231 744h1v1h-1zM249 744h1v1h-1zM267 744h1v1h-1zM286 744h1v1h-1zM304 744h1v1h-1zM322 744h1v1h-1zM340 744h1v1h-1zM358 744h1v1h-1zM376 744h1v1h-1zM394 744h2v1h-2zM413 744h1v1h-1zM431 744h1v1h-1zM449 744h1v1h-1zM467 744h1v1h-1zM485 744h1v1h-1zM503 744h1v1h-1zM522 744h1v1h-1zM540 744h1v1h-1zM558 744h1v1h-1zM576 744h2v1h-2zM594 744h1v1h-1zM612 744h1v1h-1zM631 744h1v1h-1zM649 744h1v1h-1zM667 744h1v1h-1zM685 744h1v1h-1zM703 744h1v1h-1zM721 744h1v1h-1zM740 744h1v1h-1zM757 744h2v1h-2zM776 744h1v1h-1zM794 744h1v1h-1zM812 744h1v1h-1zM830 744h1v1h-1zM848 744h1v1h-1zM867 744h1v1h-1zM885 744h1v1h-1zM903 744h1v1h-1zM921 744h1v1h-1zM939 744h2v1h-2zM957 744h1v1h-1zM976 744h1v1h-1zM994 744h1v1h-1zM1012 744h1v1h-1zM1030 744h1v1h-1zM1048 744h1v1h-1zM1066 744h1v1h-1zM1085 744h1v1h-1zM1103 744h1v1h-1zM1120 744h2v1h-2zM1139 744h1v1h-1zM1157 744h1v1h-1zM1175 744h1v1h-1zM1194 744h1v1h-1zM1212 744h1v1h-1zM1230 744h1v1h-1zM1248 744h1v1h-1zM1266 744h1v1h-1zM1284 744h1v1h-1zM1302 744h2v1h-2zM1321 744h1v1h-1zM1339 744h1v1h-1zM1357 744h1v1h-1zM1375 744h1v1h-1zM1393 744h1v1h-1zM1411 744h1v1h-1zM1430 744h1v1h-1zM1448 744h1v1h-1zM1466 744h1v1h-1zM1484 744h2v1h-2zM1502 744h1v1h-1zM1520 744h1v1h-1zM1539 744h1v1h-1zM1557 744h1v1h-1zM1575 744h1v1h-1zM13 762h1v1h-1zM31 762h2v1h-2zM49 762h1v1h-1zM68 762h1v1h-1zM86 762h1v1h-1zM104 762h1v1h-1zM122 762h1v1h-1zM140 762h1v1h-1zM158 762h1v1h-1zM177 762h1v1h-1zM195 762h1v1h-1zM212 762h2v1h-2zM231 762h1v1h-1zM249 762h1v1h-1zM267 762h1v1h-1zM286 762h1v1h-1zM304 762h1v1h-1zM322 762h1v1h-1zM340 762h1v1h-1zM358 762h1v1h-1zM376 762h1v1h-1zM394 762h2v1h-2zM413 762h1v1h-1zM431 762h1v1h-1zM449 762h1v1h-1zM467 762h1v1h-1zM485 762h1v1h-1zM503 762h1v1h-1zM522 762h1v1h-1zM540 762h1v1h-1zM558 762h1v1h-1zM576 762h2v1h-2zM594 762h1v1h-1zM612 762h1v1h-1zM631 762h1v1h-1zM649 762h1v1h-1zM667 762h1v1h-1zM685 762h1v1h-1zM703 762h1v1h-1zM721 762h1v1h-1zM740 762h1v1h-1zM757 762h2v1h-2zM776 762h1v1h-1zM794 762h1v1h-1zM812 762h1v1h-1zM830 762h1v1h-1zM848 762h1v1h-1zM867 762h1v1h-1zM885 762h1v1h-1zM903 762h1v1h-1zM921 762h1v1h-1zM939 762h2v1h-2zM957 762h1v1h-1zM976 762h1v1h-1zM994 762h1v1h-1zM1012 762h1v1h-1zM1030 762h1v1h-1zM1048 762h1v1h-1zM1066 762h1v1h-1zM1085 762h1v1h-1zM1103 762h1v1h-1zM1120 762h2v1h-2zM1139 762h1v1h-1zM1157 762h1v1h-1zM1175 762h1v1h-1zM1194 762h1v1h-1zM1212 762h1v1h-1zM1230 762h1v1h-1zM1248 762h1v1h-1zM1266 762h1v1h-1zM1284 762h1v1h-1zM1302 762h2v1h-2zM1321 762h1v1h-1zM1339 762h1v1h-1zM1357 762h1v1h-1zM1375 762h1v1h-1zM1393 762h1v1h-1zM1411 762h1v1h-1zM1430 762h1v1h-1zM1448 762h1v1h-1zM1466 762h1v1h-1zM1484 762h2v1h-2zM1502 762h1v1h-1zM1520 762h1v1h-1zM1539 762h1v1h-1zM1557 762h1v1h-1zM1575 762h1v1h-1zM13 780h1v1h-1zM31 780h2v1h-2zM49 780h1v1h-1zM68 780h1v1h-1zM86 780h1v1h-1zM104 780h1v1h-1zM122 780h1v1h-1zM140 780h1v1h-1zM158 780h1v1h-1zM177 780h1v1h-1zM195 780h1v1h-1zM212 780h2v1h-2zM231 780h1v1h-1zM249 780h1v1h-1zM267 780h1v1h-1zM286 780h1v1h-1zM304 780h1v1h-1zM322 780h1v1h-1zM340 780h1v1h-1zM358 780h1v1h-1zM376 780h1v1h-1zM394 780h2v1h-2zM413 780h1v1h-1zM431 780h1v1h-1zM449 780h1v1h-1zM467 780h1v1h-1zM485 780h1v1h-1zM503 780h1v1h-1zM522 780h1v1h-1zM540 780h1v1h-1zM558 780h1v1h-1zM576 780h2v1h-2zM594 780h1v1h-1zM612 780h1v1h-1zM631 780h1v1h-1zM649 780h1v1h-1zM667 780h1v1h-1zM685 780h1v1h-1zM703 780h1v1h-1zM721 780h1v1h-1zM740 780h1v1h-1zM757 780h2v1h-2zM776 780h1v1h-1zM794 780h1v1h-1zM812 780h1v1h-1zM830 780h1v1h-1zM848 780h1v1h-1zM867 780h1v1h-1zM885 780h1v1h-1zM903 780h1v1h-1zM921 780h1v1h-1zM939 780h2v1h-2zM957 780h1v1h-1zM976 780h1v1h-1zM994 780h1v1h-1zM1012 780h1v1h-1zM1030 780h1v1h-1zM1048 780h1v1h-1zM1066 780h1v1h-1zM1085 780h1v1h-1zM1103 780h1v1h-1zM1120 780h2v1h-2zM1139 780h1v1h-1zM1157 780h1v1h-1zM1175 780h1v1h-1zM1194 780h1v1h-1zM1212 780h1v1h-1zM1230 780h1v1h-1zM1248 780h1v1h-1zM1266 780h1v1h-1zM1284 780h1v1h-1zM1302 780h2v1h-2zM1321 780h1v1h-1zM1339 780h1v1h-1zM1357 780h1v1h-1zM1375 780h1v1h-1zM1393 780h1v1h-1zM1411 780h1v1h-1zM1430 780h1v1h-1zM1448 780h1v1h-1zM1466 780h1v1h-1zM1484 780h2v1h-2zM1502 780h1v1h-1zM1520 780h1v1h-1zM1539 780h1v1h-1zM1557 780h1v1h-1zM1575 780h1v1h-1zM13 798h1v1h-1zM31 798h2v1h-2zM49 798h1v1h-1zM68 798h1v1h-1zM86 798h1v1h-1zM104 798h1v1h-1zM122 798h1v1h-1zM140 798h1v1h-1zM158 798h1v1h-1zM177 798h1v1h-1zM195 798h1v1h-1zM212 798h2v1h-2zM231 798h1v1h-1zM249 798h1v1h-1zM267 798h1v1h-1zM286 798h1v1h-1zM304 798h1v1h-1zM322 798h1v1h-1zM340 798h1v1h-1zM358 798h1v1h-1zM376 798h1v1h-1zM394 798h2v1h-2zM413 798h1v1h-1zM431 798h1v1h-1zM449 798h1v1h-1zM467 798h1v1h-1zM485 798h1v1h-1zM503 798h1v1h-1zM522 798h1v1h-1zM540 798h1v1h-1zM558 798h1v1h-1zM576 798h2v1h-2zM594 798h1v1h-1zM612 798h1v1h-1zM631 798h1v1h-1zM649 798h1v1h-1zM667 798h1v1h-1zM685 798h1v1h-1zM703 798h1v1h-1zM721 798h1v1h-1zM740 798h1v1h-1zM757 798h2v1h-2zM776 798h1v1h-1zM794 798h1v1h-1zM812 798h1v1h-1zM830 798h1v1h-1zM848 798h1v1h-1zM867 798h1v1h-1zM885 798h1v1h-1zM903 798h1v1h-1zM921 798h1v1h-1zM939 798h2v1h-2zM957 798h1v1h-1zM976 798h1v1h-1zM994 798h1v1h-1zM1012 798h1v1h-1zM1030 798h1v1h-1zM1048 798h1v1h-1zM1066 798h1v1h-1zM1085 798h1v1h-1zM1103 798h1v1h-1zM1120 798h2v1h-2zM1139 798h1v1h-1zM1157 798h1v1h-1zM1175 798h1v1h-1zM1194 798h1v1h-1zM1212 798h1v1h-1zM1230 798h1v1h-1zM1248 798h1v1h-1zM1266 798h1v1h-1zM1284 798h1v1h-1zM1302 798h2v1h-2zM1321 798h1v1h-1zM1339 798h1v1h-1zM1357 798h1v1h-1zM1375 798h1v1h-1zM1393 798h1v1h-1zM1411 798h1v1h-1zM1430 798h1v1h-1zM1448 798h1v1h-1zM1466 798h1v1h-1zM1484 798h2v1h-2zM1502 798h1v1h-1zM1520 798h1v1h-1zM1539 798h1v1h-1zM1557 798h1v1h-1zM1575 798h1v1h-1zM13 816h1v1h-1zM31 816h2v1h-2zM49 816h1v1h-1zM68 816h1v1h-1zM86 816h1v1h-1zM104 816h1v1h-1zM122 816h1v1h-1zM140 816h1v1h-1zM158 816h1v1h-1zM177 816h1v1h-1zM195 816h1v1h-1zM212 816h2v1h-2zM231 816h1v1h-1zM249 816h1v1h-1zM267 816h1v1h-1zM286 816h1v1h-1zM304 816h1v1h-1zM322 816h1v1h-1zM340 816h1v1h-1zM358 816h1v1h-1zM376 816h1v1h-1zM394 816h2v1h-2zM413 816h1v1h-1zM431 816h1v1h-1zM449 816h1v1h-1zM467 816h1v1h-1zM485 816h1v1h-1zM503 816h1v1h-1zM522 816h1v1h-1zM540 816h1v1h-1zM558 816h1v1h-1zM576 816h2v1h-2zM594 816h1v1h-1zM612 816h1v1h-1zM631 816h1v1h-1zM649 816h1v1h-1zM667 816h1v1h-1zM685 816h1v1h-1zM703 816h1v1h-1zM721 816h1v1h-1zM740 816h1v1h-1zM757 816h2v1h-2zM776 816h1v1h-1zM794 816h1v1h-1zM812 816h1v1h-1zM830 816h1v1h-1zM848 816h1v1h-1zM867 816h1v1h-1zM885 816h1v1h-1zM903 816h1v1h-1zM921 816h1v1h-1zM939 816h2v1h-2zM957 816h1v1h-1zM976 816h1v1h-1zM994 816h1v1h-1zM1012 816h1v1h-1zM1030 816h1v1h-1zM1048 816h1v1h-1zM1066 816h1v1h-1zM1085 816h1v1h-1zM1103 816h1v1h-1zM1120 816h2v1h-2zM1139 816h1v1h-1zM1157 816h1v1h-1zM1175 816h1v1h-1zM1194 816h1v1h-1zM1212 816h1v1h-1zM1230 816h1v1h-1zM1248 816h1v1h-1zM1266 816h1v1h-1zM1284 816h1v1h-1zM1302 816h2v1h-2zM1321 816h1v1h-1zM1339 816h1v1h-1zM1357 816h1v1h-1zM1375 816h1v1h-1zM1393 816h1v1h-1zM1411 816h1v1h-1zM1430 816h1v1h-1zM1448 816h1v1h-1zM1466 816h1v1h-1zM1484 816h2v1h-2zM1502 816h1v1h-1zM1520 816h1v1h-1zM1539 816h1v1h-1zM1557 816h1v1h-1zM1575 816h1v1h-1zM13 834h1v2h-1zM31 834h2v2h-2zM49 834h1v2h-1zM68 834h1v2h-1zM86 834h1v2h-1zM104 834h1v2h-1zM122 834h1v2h-1zM140 834h1v2h-1zM158 834h1v2h-1zM177 834h1v2h-1zM195 834h1v2h-1zM212 834h2v2h-2zM231 834h1v2h-1zM249 834h1v2h-1zM267 834h1v2h-1zM286 834h1v2h-1zM304 834h1v2h-1zM322 834h1v2h-1zM340 834h1v2h-1zM358 834h1v2h-1zM376 834h1v2h-1zM394 834h2v2h-2zM413 834h1v2h-1zM431 834h1v2h-1zM449 834h1v2h-1zM467 834h1v2h-1zM485 834h1v2h-1zM503 834h1v2h-1zM522 834h1v2h-1zM540 834h1v2h-1zM558 834h1v2h-1zM576 834h2v2h-2zM594 834h1v2h-1zM612 834h1v2h-1zM631 834h1v2h-1zM649 834h1v2h-1zM667 834h1v2h-1zM685 834h1v2h-1zM703 834h1v2h-1zM721 834h1v2h-1zM740 834h1v2h-1zM757 834h2v2h-2zM776 834h1v2h-1zM794 834h1v2h-1zM812 834h1v2h-1zM830 834h1v2h-1zM848 834h1v2h-1zM867 834h1v2h-1zM885 834h1v2h-1zM903 834h1v2h-1zM921 834h1v2h-1zM939 834h2v2h-2zM957 834h1v2h-1zM976 834h1v2h-1zM994 834h1v2h-1zM1012 834h1v2h-1zM1030 834h1v2h-1zM1048 834h1v2h-1zM1066 834h1v2h-1zM1085 834h1v2h-1zM1103 834h1v2h-1zM1120 834h2v2h-2zM1139 834h1v2h-1zM1157 834h1v2h-1zM1175 834h1v2h-1zM1194 834h1v2h-1zM1212 834h1v2h-1zM1230 834h1v2h-1zM1248 834h1v2h-1zM1266 834h1v2h-1zM1284 834h1v2h-1zM1302 834h2v2h-2zM1321 834h1v2h-1zM1339 834h1v2h-1zM1357 834h1v2h-1zM1375 834h1v2h-1zM1393 834h1v2h-1zM1411 834h1v2h-1zM1430 834h1v2h-1zM1448 834h1v2h-1zM1466 834h1v2h-1zM1484 834h2v2h-2zM1502 834h1v2h-1zM1520 834h1v2h-1zM1539 834h1v2h-1zM1557 834h1v2h-1zM1575 834h1v2h-1zM13 853h1v1h-1zM31 853h2v1h-2zM49 853h1v1h-1zM68 853h1v1h-1zM86 853h1v1h-1zM104 853h1v1h-1zM122 853h1v1h-1zM140 853h1v1h-1zM158 853h1v1h-1zM177 853h1v1h-1zM195 853h1v1h-1zM212 853h2v1h-2zM231 853h1v1h-1zM249 853h1v1h-1zM267 853h1v1h-1zM286 853h1v1h-1zM304 853h1v1h-1zM322 853h1v1h-1zM340 853h1v1h-1zM358 853h1v1h-1zM376 853h1v1h-1zM394 853h2v1h-2zM413 853h1v1h-1zM431 853h1v1h-1zM449 853h1v1h-1zM467 853h1v1h-1zM485 853h1v1h-1zM503 853h1v1h-1zM522 853h1v1h-1zM540 853h1v1h-1zM558 853h1v1h-1zM576 853h2v1h-2zM594 853h1v1h-1zM612 853h1v1h-1zM631 853h1v1h-1zM649 853h1v1h-1zM667 853h1v1h-1zM685 853h1v1h-1zM703 853h1v1h-1zM721 853h1v1h-1zM740 853h1v1h-1zM757 853h2v1h-2zM776 853h1v1h-1zM794 853h1v1h-1zM812 853h1v1h-1zM830 853h1v1h-1zM848 853h1v1h-1zM867 853h1v1h-1zM885 853h1v1h-1zM903 853h1v1h-1zM921 853h1v1h-1zM939 853h2v1h-2zM957 853h1v1h-1zM976 853h1v1h-1zM994 853h1v1h-1zM1012 853h1v1h-1zM1030 853h1v1h-1zM1048 853h1v1h-1zM1066 853h1v1h-1zM1085 853h1v1h-1zM1103 853h1v1h-1zM1120 853h2v1h-2zM1139 853h1v1h-1zM1157 853h1v1h-1zM1175 853h1v1h-1zM1194 853h1v1h-1zM1212 853h1v1h-1zM1230 853h1v1h-1zM1248 853h1v1h-1zM1266 853h1v1h-1zM1284 853h1v1h-1zM1302 853h2v1h-2zM1321 853h1v1h-1zM1339 853h1v1h-1zM1357 853h1v1h-1zM1375 853h1v1h-1zM1393 853h1v1h-1zM1411 853h1v1h-1zM1430 853h1v1h-1zM1448 853h1v1h-1zM1466 853h1v1h-1zM1484 853h2v1h-2zM1502 853h1v1h-1zM1520 853h1v1h-1zM1539 853h1v1h-1zM1557 853h1v1h-1zM1575 853h1v1h-1zM13 871h1v1h-1zM31 871h2v1h-2zM49 871h1v1h-1zM68 871h1v1h-1zM86 871h1v1h-1zM104 871h1v1h-1zM122 871h1v1h-1zM140 871h1v1h-1zM158 871h1v1h-1zM177 871h1v1h-1zM195 871h1v1h-1zM212 871h2v1h-2zM231 871h1v1h-1zM249 871h1v1h-1zM267 871h1v1h-1zM286 871h1v1h-1zM304 871h1v1h-1zM322 871h1v1h-1zM340 871h1v1h-1zM358 871h1v1h-1zM376 871h1v1h-1zM394 871h2v1h-2zM413 871h1v1h-1zM431 871h1v1h-1zM449 871h1v1h-1zM467 871h1v1h-1zM485 871h1v1h-1zM503 871h1v1h-1zM522 871h1v1h-1zM540 871h1v1h-1zM558 871h1v1h-1zM576 871h2v1h-2zM594 871h1v1h-1zM612 871h1v1h-1zM631 871h1v1h-1zM649 871h1v1h-1zM667 871h1v1h-1zM685 871h1v1h-1zM703 871h1v1h-1zM721 871h1v1h-1zM740 871h1v1h-1zM757 871h2v1h-2zM776 871h1v1h-1zM794 871h1v1h-1zM812 871h1v1h-1zM830 871h1v1h-1zM848 871h1v1h-1zM867 871h1v1h-1zM885 871h1v1h-1zM903 871h1v1h-1zM921 871h1v1h-1zM939 871h2v1h-2zM957 871h1v1h-1zM976 871h1v1h-1zM994 871h1v1h-1zM1012 871h1v1h-1zM1030 871h1v1h-1zM1048 871h1v1h-1zM1066 871h1v1h-1zM1085 871h1v1h-1zM1103 871h1v1h-1zM1120 871h2v1h-2zM1139 871h1v1h-1zM1157 871h1v1h-1zM1175 871h1v1h-1zM1194 871h1v1h-1zM1212 871h1v1h-1zM1230 871h1v1h-1zM1248 871h1v1h-1zM1266 871h1v1h-1zM1284 871h1v1h-1zM1302 871h2v1h-2zM1321 871h1v1h-1zM1339 871h1v1h-1zM1357 871h1v1h-1zM1375 871h1v1h-1zM1393 871h1v1h-1zM1411 871h1v1h-1zM1430 871h1v1h-1zM1448 871h1v1h-1zM1466 871h1v1h-1zM1484 871h2v1h-2zM1502 871h1v1h-1zM1520 871h1v1h-1zM1539 871h1v1h-1zM1557 871h1v1h-1zM1575 871h1v1h-1zM13 889h1v1h-1zM31 889h2v1h-2zM49 889h1v1h-1zM68 889h1v1h-1zM86 889h1v1h-1zM104 889h1v1h-1zM122 889h1v1h-1zM140 889h1v1h-1zM158 889h1v1h-1zM177 889h1v1h-1zM195 889h1v1h-1zM212 889h2v1h-2zM231 889h1v1h-1zM249 889h1v1h-1zM267 889h1v1h-1zM286 889h1v1h-1zM304 889h1v1h-1zM322 889h1v1h-1zM340 889h1v1h-1zM358 889h1v1h-1zM376 889h1v1h-1zM394 889h2v1h-2zM413 889h1v1h-1zM431 889h1v1h-1zM449 889h1v1h-1zM467 889h1v1h-1zM485 889h1v1h-1zM503 889h1v1h-1zM522 889h1v1h-1zM540 889h1v1h-1zM558 889h1v1h-1zM576 889h2v1h-2zM594 889h1v1h-1zM612 889h1v1h-1zM631 889h1v1h-1zM649 889h1v1h-1zM667 889h1v1h-1zM685 889h1v1h-1zM703 889h1v1h-1zM721 889h1v1h-1zM740 889h1v1h-1zM757 889h2v1h-2zM776 889h1v1h-1zM794 889h1v1h-1zM812 889h1v1h-1zM830 889h1v1h-1zM848 889h1v1h-1zM867 889h1v1h-1zM885 889h1v1h-1zM903 889h1v1h-1zM921 889h1v1h-1zM939 889h2v1h-2zM957 889h1v1h-1zM976 889h1v1h-1zM994 889h1v1h-1zM1012 889h1v1h-1zM1030 889h1v1h-1zM1048 889h1v1h-1zM1066 889h1v1h-1zM1085 889h1v1h-1zM1103 889h1v1h-1zM1120 889h2v1h-2zM1139 889h1v1h-1zM1157 889h1v1h-1zM1175 889h1v1h-1zM1194 889h1v1h-1zM1212 889h1v1h-1zM1230 889h1v1h-1zM1248 889h1v1h-1zM1266 889h1v1h-1zM1284 889h1v1h-1zM1302 889h2v1h-2zM1321 889h1v1h-1zM1339 889h1v1h-1zM1357 889h1v1h-1zM1375 889h1v1h-1zM1393 889h1v1h-1zM1411 889h1v1h-1zM1430 889h1v1h-1zM1448 889h1v1h-1zM1466 889h1v1h-1zM1484 889h2v1h-2zM1502 889h1v1h-1zM1520 889h1v1h-1zM1539 889h1v1h-1zM1557 889h1v1h-1zM1575 889h1v1h-1z" fill="#848484" shape-rendering="crispEdges"/><path d="M1575.5 0V542" stroke="#840000" stroke-width="5" fill="none"/><path d="M1575.5 542H1069.5L1014 598" stroke="#840000" stroke-width="4" fill="none" stroke-linejoin="miter"/><path d="M1589 542H1575.5" stroke="#840000" stroke-width="4.2" fill="none"/><path d="M1411.5 0V17.400000000000006H1589" stroke="#008400" stroke-width="1.2" fill="none"/><path d="M1430.1 11.5l8.6 5.9M1443.0 11.5l8.6 5.9M1456.0 11.5l8.6 5.9M1468.9 11.5l8.6 5.9M1481.9 11.5l8.6 5.9M1494.8 11.5l8.6 5.9M1507.7 11.5l8.6 5.9M1520.7 11.5l8.6 5.9M1533.6 11.5l8.6 5.9M1546.6 11.5l8.6 5.9M1559.5 11.5l8.6 5.9M1572.4 11.5l8.6 5.9M1585.4 11.5l8.6 5.9M1598.3 11.5l8.6 5.9M1412.5 7.900000000000006l12.9 9.5M1415.0 0l5.5 4.5" stroke="#008400" stroke-width="1.2" fill="none"/><path d="M401.77 -2A3346.416 3346.416 0 0 1 1287.04 909" stroke="#c8c800" stroke-width="3" fill="none" shape-rendering="crispEdges"/><path d="M388.5 0.0 L949.0 477.9 L999.0 531.5 L1287.0 906.7" stroke="#008c00" stroke-width="1" fill="none" shape-rendering="crispEdges"/><path d="M59.3 0L965.6 906.7" stroke="#008c00" stroke-width="1" fill="none" shape-rendering="crispEdges"/><path d="M67.9 7.1l4 4M73.3 11.6a1.3 1.3 0 1 0 0.01 0M98.8 38.0l4 4M104.2 42.5a1.3 1.3 0 1 0 0.01 0M129.7 68.9l4 4M135.1 73.4a1.3 1.3 0 1 0 0.01 0M160.6 99.8l4 4M166.0 104.3a1.3 1.3 0 1 0 0.01 0M191.5 130.8l4 4M196.9 135.3a1.3 1.3 0 1 0 0.01 0M222.4 161.7l4 4M227.8 166.2a1.3 1.3 0 1 0 0.01 0M253.3 192.6l4 4M258.7 197.1a1.3 1.3 0 1 0 0.01 0M284.2 223.5l4 4M289.6 228.0a1.3 1.3 0 1 0 0.01 0M315.1 254.4l4 4M320.5 258.9a1.3 1.3 0 1 0 0.01 0M346.0 285.3l4 4M351.4 289.8a1.3 1.3 0 1 0 0.01 0M376.9 316.2l4 4M382.3 320.7a1.3 1.3 0 1 0 0.01 0M407.8 347.2l4 4M413.2 351.7a1.3 1.3 0 1 0 0.01 0M438.7 378.1l4 4M444.1 382.6a1.3 1.3 0 1 0 0.01 0M469.6 409.0l4 4M475.0 413.5a1.3 1.3 0 1 0 0.01 0M500.5 439.9l4 4M505.9 444.4a1.3 1.3 0 1 0 0.01 0M531.4 470.8l4 4M536.8 475.3a1.3 1.3 0 1 0 0.01 0M562.3 501.7l4 4M567.7 506.2a1.3 1.3 0 1 0 0.01 0M593.2 532.6l4 4M598.6 537.1a1.3 1.3 0 1 0 0.01 0M624.1 563.5l4 4M629.5 568.0a1.3 1.3 0 1 0 0.01 0M655.0 594.5l4 4M660.4 599.0a1.3 1.3 0 1 0 0.01 0M685.9 625.4l4 4M691.3 629.9a1.3 1.3 0 1 0 0.01 0M716.8 656.3l4 4M722.2 660.8a1.3 1.3 0 1 0 0.01 0M747.7 687.2l4 4M753.1 691.7a1.3 1.3 0 1 0 0.01 0M778.6 718.1l4 4M784.0 722.6a1.3 1.3 0 1 0 0.01 0M809.5 749.0l4 4M814.9 753.5a1.3 1.3 0 1 0 0.01 0M840.4 779.9l4 4M845.8 784.4a1.3 1.3 0 1 0 0.01 0M871.3 810.9l4 4M876.7 815.4a1.3 1.3 0 1 0 0.01 0M902.2 841.8l4 4M907.6 846.3a1.3 1.3 0 1 0 0.01 0M933.1 872.7l4 4M938.5 877.2a1.3 1.3 0 1 0 0.01 0" stroke="#008c00" stroke-width="1.2" fill="none"/><path d="M397.6 7.8l2.3 1.9M407.5 16.2l2.3 1.9M417.4 24.7l2.3 1.9M427.3 33.1l2.3 1.9M437.2 41.5l2.3 1.9M447.1 50.0l2.3 1.9M457.0 58.4l2.3 1.9M466.9 66.8l2.3 1.9M476.8 75.3l2.3 1.9M486.7 83.7l2.3 1.9M496.6 92.1l2.3 1.9M506.4 100.6l2.3 1.9M516.3 109.0l2.3 1.9M526.2 117.4l2.3 1.9M536.1 125.9l2.3 1.9M546.0 134.3l2.3 1.9M555.9 142.7l2.3 1.9M565.8 151.2l2.3 1.9M575.7 159.6l2.3 1.9M585.6 168.0l2.3 1.9M595.5 176.5l2.3 1.9M605.4 184.9l2.3 1.9M615.3 193.3l2.3 1.9M625.2 201.8l2.3 1.9M635.0 210.2l2.3 1.9M644.9 218.6l2.3 1.9M654.8 227.1l2.3 1.9M664.7 235.5l2.3 1.9M674.6 244.0l2.3 1.9M684.5 252.4l2.3 1.9M694.4 260.8l2.3 1.9M704.3 269.3l2.3 1.9M714.2 277.7l2.3 1.9M724.1 286.1l2.3 1.9M734.0 294.6l2.3 1.9M743.9 303.0l2.3 1.9M753.8 311.4l2.3 1.9M763.6 319.9l2.3 1.9M773.5 328.3l2.3 1.9M783.4 336.7l2.3 1.9M793.3 345.2l2.3 1.9M803.2 353.6l2.3 1.9M813.1 362.0l2.3 1.9M823.0 370.5l2.3 1.9M832.9 378.9l2.3 1.9M842.8 387.3l2.3 1.9M852.7 395.8l2.3 1.9M862.6 404.2l2.3 1.9M872.5 412.6l2.3 1.9M882.4 421.1l2.3 1.9M892.2 429.5l2.3 1.9M902.1 437.9l2.3 1.9M912.0 446.4l2.3 1.9M921.9 454.8l2.3 1.9M941.7 471.7l2.3 1.9M960.2 489.9l2.0 2.2M966.8 500.0L974.3 504.8M984.6 519.0L992.1 523.8M1001.2 539.0L1008.7 543.8M1017.0 559.6L1024.5 564.4M1032.9 580.2L1040.4 585.0M1048.7 600.9L1056.2 605.7M1064.5 621.5L1072.0 626.3M1080.4 642.1L1087.9 646.9M1096.2 662.7L1103.7 667.5M1112.0 683.4L1119.5 688.2M1127.9 704.0L1135.4 708.8M1143.7 724.6L1151.2 729.4M1159.5 745.2L1167.0 750.0M1175.4 765.9L1182.9 770.7M1191.2 786.5L1198.7 791.3M1207.0 807.1L1214.5 811.9M1222.8 827.7L1230.3 832.5M1238.7 848.4L1246.2 853.2M1254.5 869.0L1262.0 873.8M1270.3 889.6L1277.8 894.4" stroke="#008c00" stroke-width="1.3" fill="none"/><path d="M902.5 471.4L1012.5 580V671.7L1049 707.7" stroke="#008400" stroke-width="5" fill="none" stroke-linejoin="miter"/><circle cx="1012.45" cy="671.7" r="7.3" fill="#c8c8c8"/><ellipse cx="1012.45" cy="671.7" rx="4.8" ry="2.6" fill="none" stroke="#222" stroke-width="1"/><rect x="1009.95" y="668.4000000000001" width="5" height="6.6" fill="#8a7a2a"/><path d="M1011.45 669.7v4M1013.45 669.7v4M1011.45 671.7h2" stroke="#222" stroke-width="0.8"/></svg><div class="abs" style="left:35px;top:92px;width:1591px;height:1px;background:#dcdcdc"></div><div class="abs" style="left:35px;top:92px;width:1px;height:908px;background:#dcdcdc"></div><div class="abs" style="left:35px;top:1000px;width:1591px;height:1px;background:#dcdcdc"></div><div class="abs" style="left:1625px;top:92px;width:1px;height:909px;background:#dcdcdc"></div><div class="abs" style="left:0;top:0;width:1855px;height:21px;background:#cecece"></div><div class="t" style="left:7.60px;top:3.30px;font-size:15px;color:#3c3c3c;transform:scaleX(0.9999);">File</div><div class="t" style="left:48.40px;top:3.30px;font-size:15px;color:#3c3c3c;transform:scaleX(1.0622);">Edit</div><div class="t" style="left:91.80px;top:3.30px;font-size:15px;color:#3c3c3c;transform:scaleX(1.0094);">View</div><div class="t" style="left:142.20px;top:3.30px;font-size:15px;color:#3c3c3c;transform:scaleX(0.9772);">Place</div><div class="t" style="left:193.60px;top:3.30px;font-size:15px;color:#3c3c3c;transform:scaleX(1.0251);">Route</div><div class="t" style="left:250.60px;top:3.30px;font-size:15px;color:#3c3c3c;transform:scaleX(1.0000);">Preferences</div><div class="t" style="left:349.40px;top:3.30px;font-size:15px;color:#3c3c3c;transform:scaleX(1.0250);">Dimensions</div><div class="t" style="left:447.00px;top:3.30px;font-size:15px;color:#3c3c3c;transform:scaleX(0.9885);">Tools</div><div class="t" style="left:497.80px;top:3.30px;font-size:15px;color:#3c3c3c;transform:scaleX(0.9817);">Design Rules</div><div class="t" style="left:601.60px;top:3.30px;font-size:15px;color:#3c3c3c;transform:scaleX(1.0149);">Help</div><div class="abs combo" style="left:6px;top:61px;width:218px;height:25px"></div><svg class="abs" style="left:211px;top:68px" width="9" height="16" viewBox="0 0 9 16"><path d="M2 5.8L4.5 2.8L7 5.8ZM2 11.6L4.5 14.6L7 11.6Z" fill="#4a4a4a"/></svg><div class="t" style="left:12.80px;top:67.30px;font-size:15px;color:#3c3c3c;transform:scaleX(0.9610);">Track: 0.250 mm (9.84 mils) *</div><div class="abs combo" style="left:230px;top:61px;width:334px;height:25px"></div><svg class="abs" style="left:551px;top:68px" width="9" height="16" viewBox="0 0 9 16"><path d="M2 5.8L4.5 2.8L7 5.8ZM2 11.6L4.5 14.6L7 11.6Z" fill="#4a4a4a"/></svg><div class="t" style="left:235.80px;top:67.30px;font-size:15px;color:#3c3c3c;transform:scaleX(0.9724);">Via: 0.80 mm (31.5 mils)/ 0.40 mm (15.7 mils) *</div><div class="abs combo" style="left:622px;top:61px;width:225px;height:25px"></div><svg class="abs" style="left:834px;top:68px" width="9" height="16" viewBox="0 0 9 16"><path d="M2 5.8L4.5 2.8L7 5.8ZM2 11.6L4.5 14.6L7 11.6Z" fill="#4a4a4a"/></svg><div class="t" style="left:627.80px;top:67.30px;font-size:15px;color:#3c3c3c;transform:scaleX(0.9750);">Custom User Grid</div><div class="abs combo" style="left:862px;top:61px;width:123px;height:25px"></div><svg class="abs" style="left:972.5px;top:68px" width="9" height="16" viewBox="0 0 9 16"><path d="M2 5.8L4.5 2.8L7 5.8ZM2 11.6L4.5 14.6L7 11.6Z" fill="#4a4a4a"/></svg><div class="t" style="left:868.00px;top:67.30px;font-size:15px;color:#3c3c3c;transform:scaleX(1.0455);">Zoom Auto</div><div class="abs combo" style="left:691px;top:25px;width:127px;height:25px"></div><svg class="abs" style="left:805px;top:32px" width="9" height="16" viewBox="0 0 9 16"><path d="M2 5.8L4.5 2.8L7 5.8ZM2 11.6L4.5 14.6L7 11.6Z" fill="#4a4a4a"/></svg><div class="abs" style="left:694px;top:31px;width:12px;height:12px;background:#008000;border:1px solid #1a1a1a"></div><div class="t" style="left:709.20px;top:31.10px;font-size:15px;color:#3c3c3c;transform:scaleX(0.9600);">B.Cu (PgDn)</div><div class="abs" style="left:110px;top:27px;width:1px;height:23px;background:#a9a9a9"></div><div class="abs" style="left:153px;top:27px;width:1px;height:23px;background:#a9a9a9"></div><div class="abs" style="left:230px;top:27px;width:1px;height:23px;background:#a9a9a9"></div><div class="abs" style="left:307px;top:27px;width:1px;height:23px;background:#a9a9a9"></div><div class="abs" style="left:384px;top:27px;width:1px;height:23px;background:#a9a9a9"></div><div class="abs" style="left:563px;top:27px;width:1px;height:23px;background:#a9a9a9"></div><div class="abs" style="left:606px;top:27px;width:1px;height:23px;background:#a9a9a9"></div><div class="abs" style="left:683px;top:27px;width:1px;height:23px;background:#a9a9a9"></div><div class="abs" style="left:858px;top:27px;width:1px;height:23px;background:#a9a9a9"></div><div class="abs" style="left:935px;top:27px;width:1px;height:23px;background:#a9a9a9"></div><div class="abs" style="left:978px;top:27px;width:1px;height:23px;background:#a9a9a9"></div><div class="abs" style="left:572px;top:63px;width:1px;height:23px;background:#a9a9a9"></div><div class="abs" style="left:615px;top:63px;width:1px;height:23px;background:#a9a9a9"></div><div class="abs" style="left:855px;top:63px;width:1px;height:23px;background:#a9a9a9"></div><div class="abs" style="left:1664px;top:93px;width:191px;height:907px;background:#d0d0d0"></div><div class="abs" style="left:1664px;top:93px;width:191px;height:24px;background:linear-gradient(#c6c6c6,#bdbdbd 45%,#cdcdcd)"></div><div class="t" style="left:1667.60px;top:95.49px;font-size:11px;color:#141414;transform:scaleX(1.1022);">Visibles</div><div class="abs" style="left:1670px;top:116px;width:179px;height:32px;background:#d8d8d8;border-top:1px solid #cfcfcf"></div><div class="abs" style="left:1671px;top:147px;width:176px;height:845px;border:1px solid #a6a6a6;border-radius:2px;background:#d9d9d9"></div><div class="abs" style="left:1676px;top:154px;width:167px;height:834px;background:#cecece"></div><div class="abs" style="left:1727px;top:121px;width:63px;height:27px;border:1px solid #a9a9a9;border-bottom:none;border-radius:3px 3px 0 0;background:linear-gradient(#d2d2d2,#c9c9c9)"></div><div class="abs" style="left:1675px;top:117px;width:51px;height:31px;border:1px solid #a9a9a9;border-bottom:none;border-radius:3px 3px 0 0;background:linear-gradient(#e4e4e4,#d9d9d9)"></div><div class="t" style="left:1680.60px;top:125.30px;font-size:15px;color:#3c3c3c;transform:scaleX(0.9709);">Layer</div><div class="t" style="left:1732.80px;top:128.10px;font-size:15px;color:#3c3c3c;transform:scaleX(0.9829);">Render</div><div class="abs" style="left:1689px;top:160px;width:12px;height:12px;background:#840000;border:1px solid #1e1e1e"></div><div class="abs" style="left:1707px;top:159px;width:12px;height:12px;background:#fff;border:1px solid #9a9a9a;border-radius:2px"></div><svg class="abs" style="left:1708px;top:160px" width="12" height="12" viewBox="0 0 12 12"><path d="M2 6.2L4.6 9L10.2 2.4" fill="none" stroke="#1a1a1a" stroke-width="1.6"/></svg><div class="t" style="left:1727.60px;top:159.00px;font-size:15px;color:#3c3c3c;transform:scaleX(0.9388);">F.Cu</div><div class="abs" style="left:1689px;top:181px;width:12px;height:12px;background:#008400;border:1px solid #1e1e1e"></div><div class="abs" style="left:1707px;top:180px;width:12px;height:12px;background:#fff;border:1px solid #9a9a9a;border-radius:2px"></div><svg class="abs" style="left:1708px;top:181px" width="12" height="12" viewBox="0 0 12 12"><path d="M2 6.2L4.6 9L10.2 2.4" fill="none" stroke="#1a1a1a" stroke-width="1.6"/></svg><div class="t" style="left:1727.60px;top:180.00px;font-size:15px;color:#3c3c3c;transform:scaleX(0.9520);">B.Cu</div><div class="abs" style="left:1689px;top:202px;width:12px;height:12px;background:#840084;border:1px solid #1e1e1e"></div><div class="abs" style="left:1707px;top:201px;width:12px;height:12px;background:#fff;border:1px solid #9a9a9a;border-radius:2px"></div><svg class="abs" style="left:1708px;top:202px" width="12" height="12" viewBox="0 0 12 12"><path d="M2 6.2L4.6 9L10.2 2.4" fill="none" stroke="#1a1a1a" stroke-width="1.6"/></svg><div class="t" style="left:1727.60px;top:201.00px;font-size:15px;color:#3c3c3c;transform:scaleX(0.9770);">F.Adhes</div><div class="abs" style="left:1689px;top:223px;width:12px;height:12px;background:#000084;border:1px solid #1e1e1e"></div><div class="abs" style="left:1707px;top:222px;width:12px;height:12px;background:#fff;border:1px solid #9a9a9a;border-radius:2px"></div><svg class="abs" style="left:1708px;top:223px" width="12" height="12" viewBox="0 0 12 12"><path d="M2 6.2L4.6 9L10.2 2.4" fill="none" stroke="#1a1a1a" stroke-width="1.6"/></svg><div class="t" style="left:1727.60px;top:222.00px;font-size:15px;color:#3c3c3c;transform:scaleX(0.9943);">B.Adhes</div><div class="abs" style="left:1689px;top:244px;width:12px;height:12px;background:#840000;border:1px solid #1e1e1e"></div><div class="abs" style="left:1707px;top:243px;width:12px;height:12px;background:#fff;border:1px solid #9a9a9a;border-radius:2px"></div><svg class="abs" style="left:1708px;top:244px" width="12" height="12" viewBox="0 0 12 12"><path d="M2 6.2L4.6 9L10.2 2.4" fill="none" stroke="#1a1a1a" stroke-width="1.6"/></svg><div class="t" style="left:1727.60px;top:243.00px;font-size:15px;color:#3c3c3c;transform:scaleX(0.9722);">F.Paste</div><div class="abs" style="left:1689px;top:265px;width:12px;height:12px;background:#00c2c2;border:1px solid #1e1e1e"></div><div class="abs" style="left:1707px;top:264px;width:12px;height:12px;background:#fff;border:1px solid #9a9a9a;border-radius:2px"></div><svg class="abs" style="left:1708px;top:265px" width="12" height="12" viewBox="0 0 12 12"><path d="M2 6.2L4.6 9L10.2 2.4" fill="none" stroke="#1a1a1a" stroke-width="1.6"/></svg><div class="t" style="left:1727.60px;top:264.00px;font-size:15px;color:#3c3c3c;transform:scaleX(0.9830);">B.Paste</div><div class="abs" style="left:1689px;top:286px;width:12px;height:12px;background:#008484;border:1px solid #1e1e1e"></div><div class="abs" style="left:1707px;top:285px;width:12px;height:12px;background:#fff;border:1px solid #9a9a9a;border-radius:2px"></div><svg class="abs" style="left:1708px;top:286px" width="12" height="12" viewBox="0 0 12 12"><path d="M2 6.2L4.6 9L10.2 2.4" fill="none" stroke="#1a1a1a" stroke-width="1.6"/></svg><div class="t" style="left:1727.60px;top:285.00px;font-size:15px;color:#3c3c3c;transform:scaleX(0.9448);">F.SilkS</div><div class="abs" style="left:1689px;top:307px;width:12px;height:12px;background:#840084;border:1px solid #1e1e1e"></div><div class="abs" style="left:1707px;top:306px;width:12px;height:12px;background:#fff;border:1px solid #9a9a9a;border-radius:2px"></div><svg class="abs" style="left:1708px;top:307px" width="12" height="12" viewBox="0 0 12 12"><path d="M2 6.2L4.6 9L10.2 2.4" fill="none" stroke="#1a1a1a" stroke-width="1.6"/></svg><div class="t" style="left:1727.60px;top:306.00px;font-size:15px;color:#3c3c3c;transform:scaleX(0.9580);">B.SilkS</div><div class="abs" style="left:1689px;top:328px;width:12px;height:12px;background:#840084;border:1px solid #1e1e1e"></div><div class="abs" style="left:1707px;top:327px;width:12px;height:12px;background:#fff;border:1px solid #9a9a9a;border-radius:2px"></div><svg class="abs" style="left:1708px;top:328px" width="12" height="12" viewBox="0 0 12 12"><path d="M2 6.2L4.6 9L10.2 2.4" fill="none" stroke="#1a1a1a" stroke-width="1.6"/></svg><div class="t" style="left:1727.60px;top:327.00px;font-size:15px;color:#3c3c3c;transform:scaleX(0.9761);">F.Mask</div><div class="abs" style="left:1689px;top:349px;width:12px;height:12px;background:#848400;border:1px solid #1e1e1e"></div><div class="abs" style="left:1707px;top:348px;width:12px;height:12px;background:#fff;border:1px solid #9a9a9a;border-radius:2px"></div><svg class="abs" style="left:1708px;top:349px" width="12" height="12" viewBox="0 0 12 12"><path d="M2 6.2L4.6 9L10.2 2.4" fill="none" stroke="#1a1a1a" stroke-width="1.6"/></svg><div class="t" style="left:1727.60px;top:348.00px;font-size:15px;color:#3c3c3c;transform:scaleX(0.9671);">B.Mask</div><div class="abs" style="left:1689px;top:370px;width:12px;height:12px;background:#c2c2c2;border:1px solid #1e1e1e"></div><div class="abs" style="left:1707px;top:369px;width:12px;height:12px;background:#fff;border:1px solid #9a9a9a;border-radius:2px"></div><svg class="abs" style="left:1708px;top:370px" width="12" height="12" viewBox="0 0 12 12"><path d="M2 6.2L4.6 9L10.2 2.4" fill="none" stroke="#1a1a1a" stroke-width="1.6"/></svg><div class="t" style="left:1727.60px;top:369.00px;font-size:15px;color:#3c3c3c;transform:scaleX(0.9939);">Dwgs.User</div><div class="abs" style="left:1689px;top:391px;width:12px;height:12px;background:#000084;border:1px solid #1e1e1e"></div><div class="abs" style="left:1707px;top:390px;width:12px;height:12px;background:#fff;border:1px solid #9a9a9a;border-radius:2px"></div><svg class="abs" style="left:1708px;top:391px" width="12" height="12" viewBox="0 0 12 12"><path d="M2 6.2L4.6 9L10.2 2.4" fill="none" stroke="#1a1a1a" stroke-width="1.6"/></svg><div class="t" style="left:1728.60px;top:390.00px;font-size:15px;color:#3c3c3c;transform:scaleX(0.9611);">Cmts.User</div><div class="abs" style="left:1689px;top:412px;width:12px;height:12px;background:#008400;border:1px solid #1e1e1e"></div><div class="abs" style="left:1707px;top:411px;width:12px;height:12px;background:#fff;border:1px solid #9a9a9a;border-radius:2px"></div><svg class="abs" style="left:1708px;top:412px" width="12" height="12" viewBox="0 0 12 12"><path d="M2 6.2L4.6 9L10.2 2.4" fill="none" stroke="#1a1a1a" stroke-width="1.6"/></svg><div class="t" style="left:1727.60px;top:411.00px;font-size:15px;color:#3c3c3c;transform:scaleX(0.9658);">Eco1.User</div><div class="abs" style="left:1689px;top:433px;width:12px;height:12px;background:#c2c200;border:1px solid #1e1e1e"></div><div class="abs" style="left:1707px;top:432px;width:12px;height:12px;background:#fff;border:1px solid #9a9a9a;border-radius:2px"></div><svg class="abs" style="left:1708px;top:433px" width="12" height="12" viewBox="0 0 12 12"><path d="M2 6.2L4.6 9L10.2 2.4" fill="none" stroke="#1a1a1a" stroke-width="1.6"/></svg><div class="t" style="left:1727.60px;top:432.00px;font-size:15px;color:#3c3c3c;transform:scaleX(0.9658);">Eco2.User</div><div class="abs" style="left:1689px;top:454px;width:12px;height:12px;background:#c2c200;border:1px solid #1e1e1e"></div><div class="abs" style="left:1707px;top:453px;width:12px;height:12px;background:#fff;border:1px solid #9a9a9a;border-radius:2px"></div><svg class="abs" style="left:1708px;top:454px" width="12" height="12" viewBox="0 0 12 12"><path d="M2 6.2L4.6 9L10.2 2.4" fill="none" stroke="#1a1a1a" stroke-width="1.6"/></svg><div class="t" style="left:1727.60px;top:453.00px;font-size:15px;color:#3c3c3c;transform:scaleX(0.9857);">Edge.Cuts</div><div class="abs" style="left:1689px;top:475px;width:12px;height:12px;background:#c200c2;border:1px solid #1e1e1e"></div><div class="abs" style="left:1707px;top:474px;width:12px;height:12px;background:#fff;border:1px solid #9a9a9a;border-radius:2px"></div><svg class="abs" style="left:1708px;top:475px" width="12" height="12" viewBox="0 0 12 12"><path d="M2 6.2L4.6 9L10.2 2.4" fill="none" stroke="#1a1a1a" stroke-width="1.6"/></svg><div class="t" style="left:1727.60px;top:474.00px;font-size:15px;color:#3c3c3c;transform:scaleX(1.0630);">Margin</div><div class="abs" style="left:1689px;top:496px;width:12px;height:12px;background:#c2c2c2;border:1px solid #1e1e1e"></div><div class="abs" style="left:1707px;top:495px;width:12px;height:12px;background:#fff;border:1px solid #9a9a9a;border-radius:2px"></div><svg class="abs" style="left:1708px;top:496px" width="12" height="12" viewBox="0 0 12 12"><path d="M2 6.2L4.6 9L10.2 2.4" fill="none" stroke="#1a1a1a" stroke-width="1.6"/></svg><div class="t" style="left:1727.60px;top:495.00px;font-size:15px;color:#3c3c3c;transform:scaleX(0.9850);">F.CrtYd</div><div class="abs" style="left:1689px;top:517px;width:12px;height:12px;background:#848484;border:1px solid #1e1e1e"></div><div class="abs" style="left:1707px;top:516px;width:12px;height:12px;background:#fff;border:1px solid #9a9a9a;border-radius:2px"></div><svg class="abs" style="left:1708px;top:517px" width="12" height="12" viewBox="0 0 12 12"><path d="M2 6.2L4.6 9L10.2 2.4" fill="none" stroke="#1a1a1a" stroke-width="1.6"/></svg><div class="t" style="left:1727.60px;top:516.00px;font-size:15px;color:#3c3c3c;transform:scaleX(0.9835);">B.CrtYd</div><div class="abs" style="left:1689px;top:538px;width:12px;height:12px;background:#848484;border:1px solid #1e1e1e"></div><div class="abs" style="left:1707px;top:537px;width:12px;height:12px;background:#fff;border:1px solid #9a9a9a;border-radius:2px"></div><svg class="abs" style="left:1708px;top:538px" width="12" height="12" viewBox="0 0 12 12"><path d="M2 6.2L4.6 9L10.2 2.4" fill="none" stroke="#1a1a1a" stroke-width="1.6"/></svg><div class="t" style="left:1727.60px;top:537.00px;font-size:15px;color:#3c3c3c;transform:scaleX(0.9067);">F.Fab</div><div class="abs" style="left:1689px;top:559px;width:12px;height:12px;background:#000084;border:1px solid #1e1e1e"></div><div class="abs" style="left:1707px;top:558px;width:12px;height:12px;background:#fff;border:1px solid #9a9a9a;border-radius:2px"></div><svg class="abs" style="left:1708px;top:559px" width="12" height="12" viewBox="0 0 12 12"><path d="M2 6.2L4.6 9L10.2 2.4" fill="none" stroke="#1a1a1a" stroke-width="1.6"/></svg><div class="t" style="left:1727.60px;top:558.00px;font-size:15px;color:#3c3c3c;transform:scaleX(0.9256);">B.Fab</div><svg class="abs" style="left:1680px;top:180px" width="8" height="14" viewBox="0 0 8 14"><path d="M0.5 1L7.5 7L0.5 13Z" fill="#3030f0"/></svg><div class="t" style="left:13.80px;top:1001.30px;font-size:15px;color:#0f5a0f;transform:scaleX(0.9472);">Pads</div><div class="t" style="left:14.80px;top:1018.10px;font-size:15px;color:#0f5a0f;transform:scaleX(0.8970);">2</div><div class="t" style="left:80.00px;top:1001.30px;font-size:15px;color:#0f5a0f;transform:scaleX(0.9516);">Vias</div><div class="t" style="left:80.00px;top:1018.10px;font-size:15px;color:#0f5a0f;transform:scaleX(0.9091);">2</div><div class="t" style="left:140.60px;top:1001.30px;font-size:15px;color:#0f5a0f;transform:scaleX(0.9747);">Track Segments</div><div class="t" style="left:139.60px;top:1018.10px;font-size:15px;color:#0f5a0f;transform:scaleX(0.9493);">13</div><div class="t" style="left:278.80px;top:1001.30px;font-size:15px;color:#0f5060;transform:scaleX(1.0131);">Nodes</div><div class="t" style="left:279.80px;top:1018.10px;font-size:15px;color:#0f5060;transform:scaleX(0.8970);">2</div><div class="t" style="left:354.80px;top:1001.30px;font-size:15px;color:#8a0c0c;transform:scaleX(1.0416);">Nets</div><div class="t" style="left:355.80px;top:1018.10px;font-size:15px;color:#8a0c0c;transform:scaleX(0.9455);">3</div><div class="t" style="left:418.80px;top:1001.30px;font-size:15px;color:#14148a;transform:scaleX(1.0261);">Unconnected</div><div class="t" style="left:419.80px;top:1018.10px;font-size:15px;color:#14148a;transform:scaleX(0.9576);">0</div><div class="abs" style="left:0;top:1034px;width:1855px;height:22px;background:#cecece"></div><div class="t" style="left:1009.60px;top:1037.80px;font-size:15px;color:#3c3c3c;transform:scaleX(0.9223);">Z 5.07</div><div class="t" style="left:1079.60px;top:1037.80px;font-size:15px;color:#3c3c3c;transform:scaleX(0.9463);">X 122.000000  Y 79.000000</div><div class="t" style="left:1287.20px;top:1037.80px;font-size:15px;color:#3c3c3c;transform:scaleX(0.9778);">dx -34.000000  dy 49.000000  dist 59.641</div><div class="t" style="left:1612.80px;top:1037.80px;font-size:15px;color:#3c3c3c;transform:scaleX(0.9840);">mm</div><div class="abs" style="left:855px;top:996px;width:50px;height:4px;background:#5294e2"></div><div class="abs" style="left:1622px;top:549px;width:3px;height:50px;background:#4a92e6"></div><svg class="abs" style="left:0;top:0" width="1855" height="1056" viewBox="0 0 1855 1056"><path d="M10.5 26.5H32V45L26 51H10.5Z" fill="#f6f6f6" stroke="#8c8c8c" stroke-width="1"/><path d="M26 51L27 46.5L32 45" fill="#dcdcdc" stroke="#8c8c8c" stroke-width="0.8"/><path d="M12.5 28V50" stroke="#9a9a9a" stroke-width="0.9" stroke-dasharray="1 1"/><path d="M43 26.5H67V45L61 51H43Z" fill="#f6f6f6" stroke="#8c8c8c" stroke-width="1"/><path d="M45 28V50" stroke="#9a9a9a" stroke-width="0.9" stroke-dasharray="1 1"/><path d="M48.5 31V49M53.5 28L55.5 30V48M58 28L59.5 30V48M63 28V44M56 49V45" stroke="#111" stroke-width="2" fill="none"/><path d="M48 38H62" stroke="#f6f6f6" stroke-width="1.2"/><path d="M79 44L82.5 35.5H95.5L99 44Z" fill="#e0e0e0" stroke="#8a8a8a" stroke-width="1"/><rect x="77.5" y="44" width="23" height="6.5" rx="1" fill="#d2d2d2" stroke="#8a8a8a" stroke-width="1"/><circle cx="96.9" cy="46.9" r="1.1" fill="#22cc22"/><path d="M85 26H93V31.7H96.3L89 40.8L81.7 31.7H85Z" fill="#2a78e0"/><path d="M120.5 27.5H135L143.5 36V51.5H120.5Z" fill="#f4f4f4" stroke="#6a6a6a" stroke-width="1"/><path d="M135 27.5V35.5L143.5 36" fill="#e4e4e4" stroke="#9a9a9a" stroke-width="0.8"/><path d="M127.5 30V49.5M122.5 41.4H141.5" stroke="#333" stroke-width="1.2"/><path d="M127.5 28.8L125.5 32H129.5ZM127.5 50.6L125.5 47.4H129.5ZM121.4 41.4L124.6 39.4V43.4ZM142.4 41.4L139.2 39.4V43.4Z" fill="#333"/><rect x="132.5" y="46.5" width="11" height="5" fill="#f4f4f4" stroke="#7a3a3a" stroke-width="0.9"/><path d="M134 49.5H137M138.5 49.5H141.5" stroke="#222" stroke-width="1.5"/><rect x="162.3" y="26.3" width="25.2" height="25.4" fill="#fff"/><rect x="163.3" y="27.3" width="23.2" height="23.4" fill="#8aa4d4"/><path d="M164 33H169M170.5 31V36M175 35.3H186" stroke="#333" stroke-width="0.9"/><text x="175.6" y="34" font-size="9" font-family="Liberation Sans" fill="#1a1a1a" textLength="10.8">1.4</text><rect x="163.4" y="39.1" width="6.2" height="7.5" fill="#e00000" stroke="#000" stroke-width="0.9"/><rect x="171.2" y="38.2" width="4.5" height="10.3" fill="#e00000" stroke="#000" stroke-width="0.9"/><rect x="177.3" y="39.1" width="5.2" height="7.5" fill="#e00000" stroke="#000" stroke-width="0.9"/><path d="M175 50H186M184 40V48" stroke="#333" stroke-width="0.9"/><path d="M200 26.5L207.5 28L202.5 52L196.5 50.5Z" fill="#12a012" stroke="#0a6a0a" stroke-width="0.8"/><circle cx="199.5" cy="46.5" r="1" fill="#fff"/><rect x="207.1" y="30" width="6.8" height="21.8" fill="#3a86e8" stroke="#1a56b8" stroke-width="0.8"/><rect x="215.2" y="26.2" width="6.8" height="25.6" fill="#f4c628" stroke="#c09010" stroke-width="0.8"/><path d="M218.6 29V40" stroke="#fff" stroke-width="0.8"/><circle cx="208" cy="38.5" r="6.3" fill="rgba(220,235,255,0.55)" stroke="#2a2a2a" stroke-width="1.3"/><path d="M212.5 43L219.5 50" stroke="#2a2a2a" stroke-width="2.6" stroke-linecap="round"/><ellipse cx="252" cy="48.5" rx="6" ry="1.6" fill="#b8b8b8"/><path d="M241.1 36.1L249.6 28.1V32.6C256 32.6 260 36 260 41C260 45 256 48.5 252.5 48.8L251 46.5C253.8 45.8 255 43.8 255 41.8C255 39.5 252.8 37.8 249.6 38.5V43.8Z" fill="#f2d232" stroke="#c8a818" stroke-width="0.7"/><path d="M296.8 35.7L287.5 28.5V32.8C281 32.8 275.4 36 275.4 41.5C275.4 45.5 279 49 283.1 49.5L284.5 46.8C281.5 45.8 280.5 43.8 280.5 42C280.5 39.8 283.3 38 287.5 38.6V43.8Z" fill="#d4f2c4" stroke="#bfe4ac" stroke-width="0.7"/><path d="M319.5 27.5H334.5L338.5 31V39H319.5Z" fill="#f2f2f2" stroke="#9a9a9a" stroke-width="0.8"/><rect x="316.5" y="38.5" width="24" height="9" rx="2" fill="#e8e8e8" stroke="#555" stroke-width="1"/><rect x="319" y="38.8" width="19" height="4" fill="#2a2a2a"/><rect x="317.5" y="46" width="22" height="4.5" rx="1.5" fill="#fafafa" stroke="#333" stroke-width="1.2"/><circle cx="338" cy="44.5" r="0.8" fill="#22cc22"/><rect x="351.5" y="28.5" width="23" height="8" rx="2" fill="#f0f0f0" stroke="#2a2a2a" stroke-width="1.2"/><path d="M354 33.3H372" stroke="#111" stroke-width="1.3"/><rect x="371.6" y="29.8" width="1.6" height="1.6" fill="#22cc22"/><path d="M354 36V49.5M372 36V49.5" stroke="#444" stroke-width="1.6"/><path d="M351.5 49.5H356.5M369.5 49.5H374.5" stroke="#444" stroke-width="1.6"/><path d="M358 33.5H368.4V46.3H361.5L358 43Z" fill="#ececec" stroke="#8a8a8a" stroke-width="0.6"/><path d="M407.5 47A8.3 8.3 0 1 1 414.3 37.3" fill="none" stroke="#333" stroke-width="1.5"/><path d="M411 37.5H417.6L414.3 45Z" fill="#333"/><circle cx="439.9" cy="38.7" r="7.6" fill="none" stroke="#333" stroke-width="1.4"/><path d="M445.4 44.300000000000004L451.7 50.300000000000004" stroke="#2a2a2a" stroke-width="2.6" stroke-linecap="round"/><path d="M435.4 38.7H444.4M439.9 34.2V43.2" stroke="#2a2a2a" stroke-width="1.8"/><circle cx="473.8" cy="38.7" r="7.6" fill="none" stroke="#333" stroke-width="1.4"/><path d="M479.3 44.300000000000004L485.6 50.300000000000004" stroke="#2a2a2a" stroke-width="2.6" stroke-linecap="round"/><path d="M469.0 38.7H478.6" stroke="#2a2a2a" stroke-width="1.8"/><circle cx="507.6" cy="38.7" r="7.6" fill="none" stroke="#333" stroke-width="1.4"/><path d="M513.1 44.300000000000004L519.4 50.300000000000004" stroke="#2a2a2a" stroke-width="2.6" stroke-linecap="round"/><rect x="503.40000000000003" y="34.5" width="8.4" height="8.6" fill="#f4f4f4" stroke="#444" stroke-width="0.9"/><rect x="540" y="26.5" width="14.5" height="14" fill="#cfcfcf" stroke="#333" stroke-width="1" stroke-dasharray="2 1.3"/><circle cx="541.5" cy="38.7" r="7.6" fill="none" stroke="#333" stroke-width="1.4"/><path d="M547.0 44.300000000000004L553.3 50.300000000000004" stroke="#2a2a2a" stroke-width="2.6" stroke-linecap="round"/><path d="M572.5 26.5H589.5L597.3 34.3V51.3H572.5Z" fill="#f4f4f4" stroke="#8a8a8a" stroke-width="0.9"/><path d="M589.5 26.5V33.5L597.3 34.3" fill="#e6e6e6" stroke="#9a9a9a" stroke-width="0.6"/><path d="M577 29.5H589M579 33.5H594M579 37.5H594M579 41.5H594M579 45.5H594M577 49H594" stroke="#bdbdbd" stroke-width="0.8"/><circle cx="582.5" cy="38.2" r="6.2" fill="#c8d8f0" stroke="#3a4a6a" stroke-width="1.2"/><path d="M578.5 36.3H586.5M578.5 39.5H586.5" stroke="#8a8a8a" stroke-width="1.2"/><path d="M587 43L594.8 50.2" stroke="#333" stroke-width="2.6" stroke-linecap="round"/><rect x="616.5" y="26.5" width="23" height="24.8" rx="1" fill="#f0f0f0" stroke="#9a9a9a" stroke-width="0.9"/><path d="M620 29.5L627.5 35.3L637 29M620.5 37.5L627.5 35.3L634.5 38.5" fill="none" stroke="#444" stroke-width="0.7"/><circle cx="620" cy="29.5" r="1.4" fill="#138a13"/><circle cx="637" cy="29" r="1.4" fill="#138a13"/><circle cx="627.5" cy="35.3" r="1.4" fill="#138a13"/><circle cx="620.5" cy="37.5" r="1.4" fill="#138a13"/><circle cx="634.5" cy="38.5" r="1.4" fill="#138a13"/><rect x="617.8" y="41.2" width="20.5" height="8.4" fill="#0c6e12"/><text x="619.5" y="48.6" font-size="8.6" font-weight="bold" font-family="Liberation Sans" fill="#fff" textLength="17">NET</text><path d="M656 30L659 34M669 30L666 34M653 42.5L657 41M672 42.5L668 41M654 50L658 46.5M670 50L666.5 46.5" stroke="#555" stroke-width="0.9"/><ellipse cx="662.5" cy="35" rx="4.8" ry="3.3" fill="#222"/><circle cx="659.8" cy="33.5" r="0.9" fill="#e8d000"/><circle cx="665.2" cy="33.5" r="0.9" fill="#e8d000"/><ellipse cx="662.5" cy="43" rx="7.6" ry="7.6" fill="#d82828"/><circle cx="659" cy="41.5" r="1.2" fill="#222"/><circle cx="666" cy="41.5" r="1.2" fill="#222"/><circle cx="660" cy="46.5" r="1.1" fill="#222"/><circle cx="665" cy="46.5" r="1.1" fill="#222"/><circle cx="656.5" cy="44" r="0.9" fill="#222"/><circle cx="668.5" cy="44" r="0.9" fill="#222"/><circle cx="662.5" cy="38" r="1" fill="#222"/><rect x="826" y="26.8" width="24" height="24" fill="#008000"/><path d="M844.2 26.8H849L838.8 38.8H836.2V37Z" fill="#8a0000"/><rect x="835.1" y="38" width="3.8" height="10.9" fill="#8a0000"/><path d="M837 32.4L840.2 32.6L842.6 35.2L842.4 38.5L839.8 40.7L836.6 40.6L834.5 38.2L834.6 34.8Z" fill="none" stroke="#e0d8e0" stroke-width="1.8"/><path d="M844.2 26.8H849L838.8 38.8H836.2V37Z" fill="#8a0000" opacity="0.55"/><rect x="868.5" y="32.2" width="23.2" height="14.1" fill="#fafafa" stroke="#6a6a6a" stroke-width="0.9"/><path d="M871.2 28.5h4.3v5.4h-4.3zM877.9 28.5h4.3v5.4h-4.3zM884.7 28.5h4.3v5.4h-4.3zM871.2 44.6h4.3v6h-4.3zM877.9 44.6h4.3v6h-4.3zM884.7 44.6h4.3v6h-4.3z" fill="#22c83a" stroke="#6a6a6a" stroke-width="0.7"/><path d="M877.9 28.5h4.3v5.4h-4.3zM877.9 44.6h4.3v6h-4.3z" fill="#fafafa" stroke="#6a6a6a" stroke-width="0.7"/><path d="M880.4 29.5V49M871 39.3H890" stroke="#2a2a2a" stroke-width="1"/><path d="M877.6 32.3L880.4 29.5L883.2 32.3M877.6 46.3L880.4 49.1L883.2 46.3M873.8 36.5L871 39.3L873.8 42.1M887.2 36.5L890 39.3L887.2 42.1" fill="none" stroke="#2a2a2a" stroke-width="1"/><path d="M908.4 28V50M919.4 28V50" stroke="#e81010" stroke-width="2.6" stroke-linecap="round"/><path d="M903 33.3H925M903 44.4H925" stroke="#12a812" stroke-width="2.4" stroke-linecap="round"/><circle cx="908.4" cy="33.3" r="2.3" fill="#f0f0f0" stroke="#888" stroke-width="0.6"/><circle cx="919.4" cy="44.4" r="2.3" fill="#f0f0f0" stroke="#888" stroke-width="0.6"/><path d="M956.9 27.6L968 38.7L956.9 49.8L945.8 38.7Z" fill="#f2b024" stroke="#1a1a1a" stroke-width="1.3"/><path d="M954 46V35M959.8 31.5V42.5" stroke="#111" stroke-width="2.4"/><path d="M954 31.2L950.8 36.2H957.2ZM959.8 46.2L956.6 41.2H963Z" fill="#111"/><rect x="984.8000000000001" y="24.0" width="30.200000000000024" height="29.599999999999998" rx="0.3" fill="#c4ccd6" stroke="#2f4d74" stroke-width="1.2"/><ellipse cx="999.5" cy="50" rx="11" ry="1.4" fill="#7a7e84" opacity="0.8"/><path d="M988.1 31.3L1012.3 26.5V48.4L987.8 47.4Z" fill="#111" stroke="#111" stroke-width="1"/><path d="M989.5 32.3L1009.5 28.6V47L989.3 46.2Z" fill="#f0f0f0"/><path d="M990.6 33.4L1006.8 30.4V45.5L991 44.5Z" fill="#1e1e1e"/><path d="M993.3 34.7L998 37.4L993.3 40" fill="none" stroke="#10ee40" stroke-width="1.5"/><path d="M997.1 40.5H1002" stroke="#10ee40" stroke-width="1.4"/><path d="M582 65.4H606M581.5 84.4H606.5" stroke="#2a2a2a" stroke-width="1"/><path d="M592.6 65.4L587.1 63.1V67.7ZM595.2 65.4L600.8 63.1V67.7ZM591.8 84.4L586.3 82.1V86.7ZM596.3 84.4L601.8 82.1V86.7Z" fill="#2a2a2a"/><path d="M593.9 62.5V67.5L590.5 71" fill="none" stroke="#e00000" stroke-width="1.6" stroke-linecap="round"/><path d="M581 71.95H607" stroke="#e00000" stroke-width="2.1"/><path d="M581 77H607" stroke="#009400" stroke-width="3.8"/><path d="M599.5 78.5L594.2 83.5V86" fill="none" stroke="#009400" stroke-width="3.6" stroke-linecap="round"/><ellipse cx="22" cy="114" rx="7" ry="9.5" fill="#141414"/><path d="M17 103L19.5 106M27 103L24.5 106M13 112L16 113M31 112L28 113M30 123L27.5 120" stroke="#222" stroke-width="1"/><circle cx="14.9" cy="116.4" r="7.6" fill="none" stroke="#d84848" stroke-width="2.4"/><path d="M10 121.5L20 111.3" stroke="#d84848" stroke-width="2.4"/><rect x="2.9000000000000004" y="132.7" width="30.000000000000004" height="30.29999999999999" rx="0.3" fill="#c4ccd6" stroke="#2f4d74" stroke-width="1.2"/><circle cx="9" cy="138.8" r="1.25" fill="#2a2a2a"/><circle cx="14.9" cy="138.8" r="1.25" fill="#2a2a2a"/><circle cx="20.9" cy="138.8" r="1.25" fill="#2a2a2a"/><circle cx="26.9" cy="138.8" r="1.25" fill="#2a2a2a"/><circle cx="9" cy="144.8" r="1.25" fill="#2a2a2a"/><circle cx="14.9" cy="144.8" r="1.25" fill="#2a2a2a"/><circle cx="20.9" cy="144.8" r="1.25" fill="#2a2a2a"/><circle cx="26.9" cy="144.8" r="1.25" fill="#2a2a2a"/><circle cx="9" cy="150.7" r="1.25" fill="#2a2a2a"/><circle cx="14.9" cy="150.7" r="1.25" fill="#2a2a2a"/><circle cx="20.9" cy="150.7" r="1.25" fill="#2a2a2a"/><circle cx="26.9" cy="150.7" r="1.25" fill="#2a2a2a"/><circle cx="9" cy="156.9" r="1.25" fill="#2a2a2a"/><circle cx="14.9" cy="156.9" r="1.25" fill="#2a2a2a"/><circle cx="20.9" cy="156.9" r="1.25" fill="#2a2a2a"/><circle cx="26.9" cy="156.9" r="1.25" fill="#2a2a2a"/><path d="M7.5 172V192H28" fill="none" stroke="#1a1a1a" stroke-width="1.1"/><path d="M7.5 170.5L5.5 175H9.5ZM29.5 192L25 190V194Z" fill="#1a1a1a"/><path d="M8 191.5L27.9 172.1" stroke="#3a2a2a" stroke-width="1"/><path d="M16 192A8 8 0 0 0 13.6 186.3" fill="none" stroke="#444" stroke-width="0.7"/><circle cx="27.9" cy="172.1" r="2" fill="#ee0000"/><path d="M13.8 171.8V178.3M13.8 174.5Q15 172 18.5 172.2" fill="none" stroke="#3a3030" stroke-width="2"/><ellipse cx="26.3" cy="182.5" rx="3.8" ry="3" fill="none" stroke="#3a3030" stroke-width="1.5"/><path d="M26.3 178.5V188" stroke="#3a3030" stroke-width="1.5"/><text x="12.6" y="216.9" font-size="13" font-weight="bold" font-family="Liberation Sans" fill="#2a2a2a" textLength="11.6">in</text><path d="M7.5 221.4H28.5" stroke="#1a1a1a" stroke-width="1.1"/><path d="M6 221.4L10.5 219V223.8ZM30 221.4L25.5 219V223.8Z" fill="#1a1a1a"/><rect x="2.9000000000000004" y="235.0" width="30.000000000000004" height="30.199999999999967" rx="0.3" fill="#c4ccd6" stroke="#2f4d74" stroke-width="1.2"/><path d="M7.4 250.8V244.2M7.4 246Q8.5 243.8 10.6 243.8Q13 243.8 13 246.5V250.8M13 246.5Q13 243.8 15.4 243.8Q17.8 243.8 17.8 246.5V250.8M18.8 250.8V244.2M18.8 246Q19.9 243.8 22 243.8Q24.4 243.8 24.4 246.5V250.8M24.4 246.5Q24.4 243.8 26.8 243.8Q29.2 243.8 29.2 246.5V250.8" fill="none" stroke="#2a2a2a" stroke-width="1.9"/><path d="M7.5 255.5H28.5" stroke="#1a1a1a" stroke-width="1.1"/><path d="M6 255.5L10.5 253.1V257.9ZM30 255.5L25.5 253.1V257.9Z" fill="#1a1a1a"/><rect x="2.9000000000000004" y="269.0" width="30.000000000000004" height="29.99999999999998" rx="0.3" fill="#c4ccd6" stroke="#2f4d74" stroke-width="1.2"/><path d="M6 280.1H30M13.9 273V297" stroke="#8a8a8a" stroke-width="1.2"/><path d="M9 280.1H19M13.9 275.5V285" stroke="#2a2a2a" stroke-width="1.6"/><path d="M17.6 282.6V295L20.5 292.2L23.2 297L25 296L22.5 291.5H26.5Z" fill="#f4f4f4" stroke="#444" stroke-width="0.8"/><path d="M6 306.0H30" stroke="#a8a8a8" stroke-width="1"/><rect x="2.9000000000000004" y="311.8" width="30.000000000000004" height="30.29999999999999" rx="0.3" fill="#c4ccd6" stroke="#2f4d74" stroke-width="1.2"/><rect x="5" y="314" width="25.8" height="26.3" rx="2" fill="#cdd0d4"/><path d="M10 318.9L25.4 331.8M11.4 334.3L24.4 320.9M24.4 320.9H30" stroke="#fafafa" stroke-width="1.3"/><circle cx="10" cy="318.9" r="2.2" fill="#e0e000" stroke="#6a6a00" stroke-width="0.6"/><circle cx="24.4" cy="320.9" r="2.2" fill="#e0e000" stroke="#6a6a00" stroke-width="0.6"/><circle cx="11.4" cy="334.3" r="2.2" fill="#e0e000" stroke="#6a6a00" stroke-width="0.6"/><circle cx="25.4" cy="331.8" r="2.2" fill="#e0e000" stroke="#6a6a00" stroke-width="0.6"/><path d="M6 349.1H30" stroke="#a8a8a8" stroke-width="1"/><rect x="2.9000000000000004" y="354.9" width="30.000000000000004" height="30.200000000000024" rx="0.3" fill="#c4ccd6" stroke="#2f4d74" stroke-width="1.2"/><path d="M7 363.2H29" stroke="#9a9a9a" stroke-width="1.4"/><path d="M7 363.2Q8.5 363 8.5 365V373.5L12.5 377.5H23.5L27.5 373.5V365Q27.5 363 29 363.2" fill="none" stroke="#0a800a" stroke-width="2.4"/><path d="M13.5 359.5L22.3 368M22.3 359.5L13.5 368" stroke="#e00000" stroke-width="2.2"/><path d="M6 391.8H30" stroke="#a8a8a8" stroke-width="1"/><rect x="2.9000000000000004" y="397.9" width="30.000000000000004" height="30.200000000000024" rx="0.3" fill="#c4ccd6" stroke="#2f4d74" stroke-width="1.2"/><rect x="5" y="400" width="25.8" height="25.8" fill="#4c9c4c" stroke="#0a800a" stroke-width="0.7"/><path d="M13.9 410.4L20.5 409.2L28.5 423" fill="none" stroke="#e8f0e8" stroke-width="4.6" stroke-linecap="round"/><circle cx="13.9" cy="410.4" r="5.2" fill="none" stroke="#e8f0e8" stroke-width="1.5"/><path d="M13.9 410.4L20.5 409.2L28.5 423" fill="none" stroke="#0a800a" stroke-width="2.4" stroke-linecap="round"/><circle cx="13.9" cy="410.4" r="3.6" fill="#c0d8c0" stroke="#0a800a" stroke-width="2.2"/><rect x="5.3" y="434.3" width="25.3" height="25.3" fill="none" stroke="#0a900a" stroke-width="0.8"/><path d="M14 444.3L22.9 443.8L28.5 456.8" fill="none" stroke="#0a800a" stroke-width="2.4" stroke-linecap="round"/><circle cx="13.9" cy="444.3" r="3.6" fill="#d4d4d4" stroke="#0a800a" stroke-width="2.2"/><rect x="5.3" y="468.3" width="25.3" height="25.3" fill="none" stroke="#0a900a" stroke-width="0.8"/><path d="M14 478L21.5 478.5L28.5 491" fill="none" stroke="#0a800a" stroke-width="4.8" stroke-linecap="round"/><path d="M14 478L21.5 478.5L28.5 491" fill="none" stroke="#d4d4d4" stroke-width="2" stroke-linecap="round"/><path d="M14 478L21.5 478.5L28.5 491" fill="none" stroke="#0a800a" stroke-width="1.6" stroke-linecap="round"/><circle cx="13.9" cy="478.3" r="5" fill="none" stroke="#0a800a" stroke-width="1"/><circle cx="13.9" cy="478.3" r="3.3" fill="#d4d4d4" stroke="#0a800a" stroke-width="1.8"/><path d="M6 502.7H30" stroke="#a8a8a8" stroke-width="1"/><circle cx="17.9" cy="523.9" r="8.3" fill="none" stroke="#0a800a" stroke-width="1.6"/><path d="M10 523.9A7.9 7.9 0 0 1 24 518.5L17.9 523.9Z" fill="#4c9c4c"/><circle cx="17.9" cy="523.9" r="3.3" fill="#d4d4d4" stroke="#0a800a" stroke-width="1.6"/><path d="M6 535.3L29.9 511.9" stroke="#b4b4b4" stroke-width="1"/><path d="M5 545.3L17 555" stroke="#12a012" stroke-width="3.5"/><path d="M17.9 558.5L30.8 569.5" stroke="#dd0000" stroke-width="3.5"/><circle cx="17.9" cy="557.7" r="6" fill="#c4c4c4" stroke="#555" stroke-width="1"/><path d="M18 559A2.5 2.5 0 0 0 21 556L17 558Z" fill="#d8d800"/><path d="M6 569.6L29.9 545.5" stroke="#b4b4b4" stroke-width="1"/><rect x="11.9" y="579.1" width="6" height="14" fill="#dd0000"/><path d="M13 593V605M16.8 593V605" stroke="#dd0000" stroke-width="0.8"/><rect x="5" y="592" width="7" height="6" fill="#0a800a"/><path d="M18 592.7H31M18 597.5H31" stroke="#0a800a" stroke-width="0.9"/><path d="M6 603.5L29.9 580" stroke="#999" stroke-width="1.1"/><path d="M6.8 615.4L12.9 626.5H23.4L29 637" fill="none" stroke="#0a900a" stroke-width="2.2" stroke-linecap="round"/><path d="M14 615.4L17.5 620.5H29.5" fill="none" stroke="#dd0000" stroke-width="1.8" stroke-linecap="round"/><path d="M6 631.2H15L19.5 632L21.5 636" fill="none" stroke="#dd0000" stroke-width="1.8"/><path d="M19 631.5H29.5M13 622H18" fill="none" stroke="#8a8a8a" stroke-width="1.6"/><path d="M6 637L29.9 614" stroke="#999" stroke-width="0.9"/><path d="M6 648.0H30" stroke="#a8a8a8" stroke-width="1"/><rect x="2.9000000000000004" y="654.0" width="29.900000000000002" height="30.1" rx="0.3" fill="#c4ccd6" stroke="#2f4d74" stroke-width="1.2"/><path d="M6.5 678.5L14 672.3H30.5L23 678.5Z" fill="#8a00aa" stroke="#333" stroke-width="0.8"/><path d="M6.5 672.9L14 666.6999999999999H30.5L23 672.9Z" fill="#0a900a" stroke="#333" stroke-width="0.8"/><path d="M6.5 667.3L14 661.0999999999999H30.5L23 667.3Z" fill="#e00000" stroke="#333" stroke-width="0.8"/><path d="M6.5 661.7L14 655.5H30.5L23 661.7Z" fill="#10a0a0" stroke="#333" stroke-width="0.8"/><path d="M5.5 708.5H9.5V696C9.5 691.5 14.5 691.5 14.5 696V707C14.5 711 18.5 711 18.5 707V696C18.5 691.5 23.5 691.5 23.5 696V708.5H30.5" fill="none" stroke="#cc1010" stroke-width="1.5"/><path d="M5.6 704V716.5M30.5 704V716.5" stroke="#1a1a1a" stroke-width="0.9"/><path d="M6 713.4H30" stroke="#1a1a1a" stroke-width="0.8"/><path d="M6 713.4L11 711.6V715.2ZM30 713.4L25 711.6V715.2Z" fill="#1a1a1a"/><path d="M6 725.0H30" stroke="#a8a8a8" stroke-width="1"/><rect x="1627.9" y="98.9" width="30.1" height="30.099999999999987" rx="0.3" fill="#c4ccd6" stroke="#2f4d74" stroke-width="1.2"/><path d="M1636.5 105V121L1640 117.6L1643.2 124L1646 122.7L1643 116.3H1648.5Z" fill="#f4f4f4" stroke="#3a3a3a" stroke-width="1"/><path d="M1631 135.8H1655" stroke="#a8a8a8" stroke-width="1"/><path d="M1631 162.3H1655M1648.4 145V169" stroke="#c4c4c4" stroke-width="2.2"/><path d="M1631 153.5H1655" stroke="#4caa4c" stroke-width="2.6"/><path d="M1639.6 145V169" stroke="#c80000" stroke-width="2.8"/><circle cx="1639.6" cy="153.5" r="4.3" fill="#a88a24" stroke="#7a7a7a" stroke-width="0.6"/><rect x="1630.2" y="178.5" width="25" height="25" rx="2" fill="#cbcbcb"/><path d="M1639.9 187L1655 181M1639.9 187L1653.5 197.5M1639.9 187L1631.5 202.5M1639.9 187L1631 188.5M1639.9 187L1637.5 180" stroke="#fafafa" stroke-width="1.1"/><circle cx="1639.9" cy="187" r="2.3" fill="#d8d8d8" stroke="#222" stroke-width="0.9"/><path d="M1631 212.5H1655" stroke="#a8a8a8" stroke-width="1"/><rect x="1631" y="227" width="23.7" height="14.2" fill="#fdfdfd" stroke="#777" stroke-width="0.8"/><path d="M1634.3 223.3h3.8v5.6h-3.8zM1641.4 223.3h3.8v5.6h-3.8zM1648.5 223.3h3.8v5.6h-3.8zM1634.3 239.5h3.8v6.2h-3.8zM1641.4 239.5h3.8v6.2h-3.8zM1648.5 239.5h3.8v6.2h-3.8z" fill="#18c83a" stroke="#5a5a5a" stroke-width="0.6"/><path d="M1633.6 259L1638.9 268.9L1648.9 267.7L1653.5 278" fill="none" stroke="#0a800a" stroke-width="2.2" stroke-linecap="round"/><circle cx="1642.7" cy="301.2" r="7.6" fill="#b0b0b0" stroke="#9a9a9a" stroke-width="0.8"/><circle cx="1642.7" cy="301.2" r="5" fill="#c8c800" stroke="#555" stroke-width="0.6"/><rect x="1630.1" y="323.1" width="25.7" height="25.4" fill="#4c9c4c" stroke="#0a800a" stroke-width="0.7"/><path d="M1638.9 333.6L1646 333.2L1653 346" fill="none" stroke="#8a8a8a" stroke-width="2.8" stroke-linecap="round"/><circle cx="1638.9" cy="333.6" r="3.8" fill="#e0e0e0" stroke="#8a8a8a" stroke-width="2.4"/><rect x="1630.6" y="357.8" width="24.7" height="24.5" fill="#d4d4d4" stroke="#0a800a" stroke-width="1"/><rect x="1632" y="359.2" width="22" height="21.8" fill="none" stroke="#0a800a" stroke-width="2.2" stroke-dasharray="1.2 1.2"/><circle cx="1643" cy="370" r="6" fill="#f0f0f0" stroke="#d83838" stroke-width="2.3"/><path d="M1638.8 374.2L1647.2 365.8" stroke="#d83838" stroke-width="2.3"/><path d="M1631 391.9H1655" stroke="#a8a8a8" stroke-width="1"/><path d="M1633.9 403.6L1647.5 405.3L1652.1 417.8L1633.9 421.9" fill="none" stroke="#0000c0" stroke-width="1.4"/><circle cx="1633.9" cy="403.6" r="2.2" fill="#22b822"/><circle cx="1647.5" cy="405.3" r="2.2" fill="#22b822"/><circle cx="1652.1" cy="417.8" r="2.2" fill="#22b822"/><circle cx="1633.9" cy="421.9" r="2.2" fill="#22b822"/><circle cx="1642.9" cy="446.7" r="11" fill="none" stroke="#0000c0" stroke-width="1.6"/><circle cx="1642.7" cy="446.8" r="2.2" fill="#22b822"/><circle cx="1650.4" cy="439.4" r="2.2" fill="#22b822"/><path d="M1633.9 471.8Q1650 474 1652.1 489.7" fill="none" stroke="#0000c0" stroke-width="1.6"/><circle cx="1633.9" cy="471.8" r="2.2" fill="#22b822"/><circle cx="1633.9" cy="489.7" r="2.2" fill="#22b822"/><circle cx="1652.1" cy="489.7" r="2.2" fill="#22b822"/><path d="M1633.6 506.2L1648.5 507.4L1652.2 520.2L1633.6 524Z" fill="#8484f4" stroke="#0000c8" stroke-width="1.5"/><path d="M1634.3 539.5H1651.8V545.5H1650.6Q1650 541.8 1646.5 541.6H1644.8V556Q1644.8 557.6 1647 557.8V559H1639.1V557.8Q1641.2 557.6 1641.2 556V541.6H1639.5Q1636 541.8 1635.4 545.5H1634.3Z" fill="#2a2a2a"/><path d="M1660.5 543.5H1664M1660.5 546.5H1664M1660.5 549.5H1664" stroke="#b4b4b4" stroke-width="0.8"/><path d="M1631 570.5H1655" stroke="#a8a8a8" stroke-width="1"/><path d="M1638.6 590.5V581.5L1647.2 590.5V581.5" fill="none" stroke="#2a2a2a" stroke-width="1.7"/><path d="M1632.3 589.6V603.7M1654 589.6V603.7" stroke="#0000d0" stroke-width="1.8"/><path d="M1633.5 594.3H1653" stroke="#1a1a1a" stroke-width="0.8"/><path d="M1633.3 594.3L1637 592.6V596ZM1653 594.3L1649.3 592.6V596Z" fill="#1a1a1a"/><circle cx="1643.1" cy="625.4" r="7.5" fill="#111" stroke="#333" stroke-width="0.8"/><path d="M1643.1 625.4V618.5A6.9 6.9 0 0 0 1636.2 625.4ZM1643.1 625.4V632.3A6.9 6.9 0 0 0 1650 625.4Z" fill="#e0e000"/><path d="M1631.5 625.4H1654.7M1643.1 613.8V637" stroke="#111" stroke-width="1.3"/><path d="M1631 647.7H1655" stroke="#a8a8a8" stroke-width="1"/><path d="M1634.5 662Q1635 657.5 1639 658Q1642 655.5 1646 657.5Q1651 656.5 1651.5 662Z" fill="#f4f4f4" stroke="#c8c8c8" stroke-width="0.6"/><path d="M1632.5 663.5H1653" stroke="#1a1a1a" stroke-width="1.4"/><path d="M1634.6 664.2H1651L1649 679.8H1636.6Z" fill="#222"/><path d="M1636.8 666.5h3v2.4h-3zM1641.3 666.5h3v2.4h-3zM1645.8 666.5h3v2.4h-3zM1637.2 670.3h3v2.4h-3zM1641.3 670.3h3v2.4h-3zM1645.4 670.3h3v2.4h-3zM1637.6 674.1h3v2.4h-3zM1641.3 674.1h3v2.4h-3zM1645 674.1h3v2.4h-3z" fill="#f0f0f0"/><path d="M1631 690.5H1655" stroke="#a8a8a8" stroke-width="1"/><path d="M1633.1 700V721.5H1655" fill="none" stroke="#222" stroke-width="0.9"/><path d="M1633.1 698.5L1631.3 702.5H1634.9ZM1656 721.5L1652 719.7V723.3Z" fill="#222"/><circle cx="1645.3" cy="710.2" r="6.3" fill="#111"/><path d="M1645.3 710.2V704.8A5.4 5.4 0 0 0 1639.9 710.2ZM1645.3 710.2V715.6A5.4 5.4 0 0 0 1650.7 710.2Z" fill="#e0e000"/><path d="M1637 710.2H1653.5M1645.3 702V718.5" stroke="#111" stroke-width="1"/><circle cx="1633.8" cy="736.6" r="1.2" fill="#2a2a2a"/><circle cx="1639.9" cy="736.6" r="1.2" fill="#2a2a2a"/><circle cx="1645.9" cy="736.6" r="1.2" fill="#2a2a2a"/><circle cx="1651.9" cy="736.6" r="1.2" fill="#2a2a2a"/><circle cx="1633.8" cy="742.6" r="1.2" fill="#2a2a2a"/><circle cx="1639.9" cy="742.6" r="1.2" fill="#2a2a2a"/><circle cx="1645.9" cy="742.6" r="1.2" fill="#2a2a2a"/><circle cx="1651.9" cy="742.6" r="1.2" fill="#2a2a2a"/><circle cx="1633.8" cy="748.7" r="1.2" fill="#2a2a2a"/><circle cx="1639.9" cy="748.7" r="1.2" fill="#2a2a2a"/><circle cx="1645.9" cy="748.7" r="1.2" fill="#2a2a2a"/><circle cx="1651.9" cy="748.7" r="1.2" fill="#2a2a2a"/><circle cx="1633.8" cy="754.8" r="1.2" fill="#2a2a2a"/><circle cx="1639.9" cy="754.8" r="1.2" fill="#2a2a2a"/><circle cx="1645.9" cy="754.8" r="1.2" fill="#2a2a2a"/><circle cx="1651.9" cy="754.8" r="1.2" fill="#2a2a2a"/><path d="M1639.9 739V745M1643.5 748.7H1651" stroke="#2a2a2a" stroke-width="0.9" stroke-dasharray="1.2 0.8"/><path d="M1635.6 748.7H1644.2M1639.9 744.4V753" stroke="#dd0000" stroke-width="1.9"/><path d="M1630.5 779L1639 768L1642.5 767.5L1644 769.5L1641 774L1644.5 776.5L1647 772.5L1649 773.5L1647.5 778L1655.8 785V792.5L1650.5 792L1640 781L1636.5 779.5L1633 782Z" fill="#f2f2f2" stroke="#1e1e1e" stroke-width="0.9"/><path d="M1637 780L1642.5 774.5M1645.5 781.5L1647.5 780M1648.5 784.5L1650.5 783M1651.5 787.5L1653.5 786" stroke="#1e1e1e" stroke-width="0.8"/></svg>
</body></html>
